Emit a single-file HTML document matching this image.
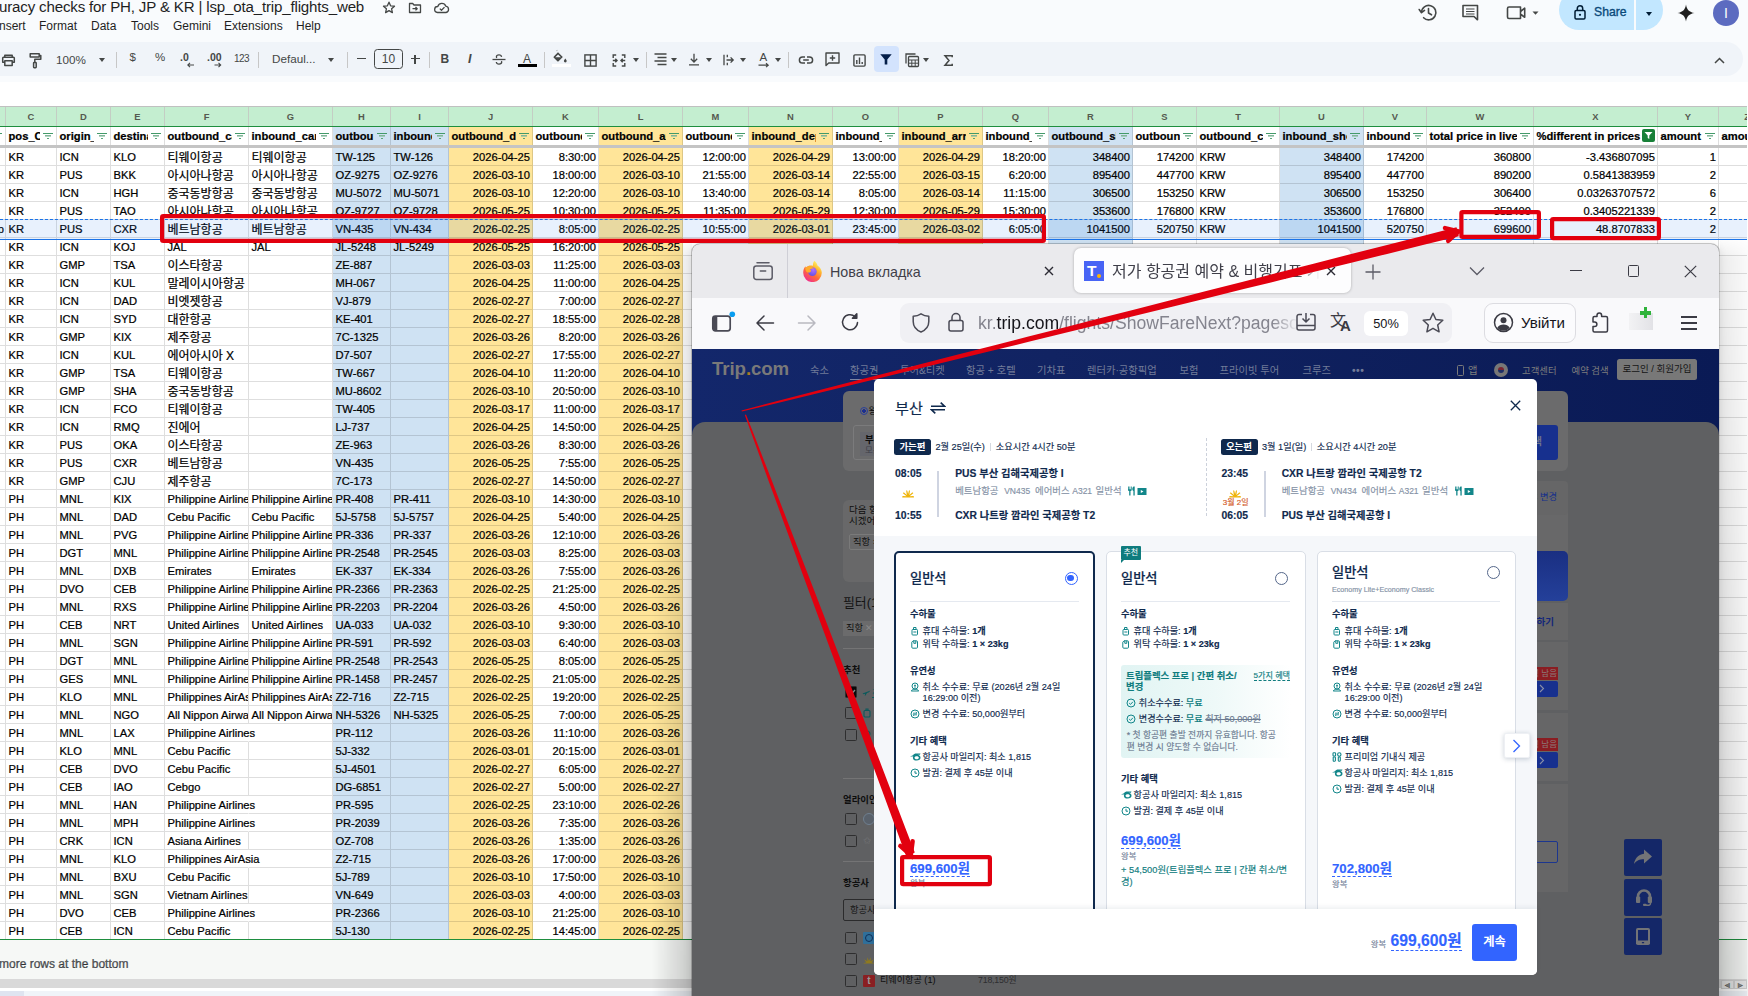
<!DOCTYPE html>
<html lang="en"><head><meta charset="utf-8"><title>Accuracy checks</title>
<style>
*{box-sizing:border-box;margin:0;padding:0}
html,body{width:1748px;height:996px;overflow:hidden;background:#fff}
body{position:relative;font-family:"Liberation Sans","Noto Sans CJK KR",sans-serif;color:#000}
.abs{position:absolute}
/* ---------- sheet top ---------- */
#top{position:absolute;left:0;top:0;width:1748px;height:82px;background:#f9fbfd}
#top .ttl{position:absolute;left:-1px;top:-2.400px;font-size:15.100px;line-height:18px;color:#1f1f1f;white-space:nowrap;letter-spacing:-.17px}
#top .menu span{position:absolute;top:19px;font-size:12px;line-height:14px;color:#1f1f1f;white-space:nowrap}
#tb{position:absolute;left:-30px;top:42px;width:1773px;height:34px;border-radius:17px;background:#f0f4f9}
#tbi{position:absolute;left:0;top:42px;width:1748px;height:34px}
#tbi .t{position:absolute;font-size:13px;color:#444746;white-space:nowrap}
#tbi .sep{position:absolute;top:10px;width:1px;height:16px;background:#c7c7c7}
#tbi svg{position:absolute;overflow:visible}
.car{position:absolute;width:0;height:0;border-left:3.5px solid transparent;border-right:3.5px solid transparent;border-top:4px solid #444746}
/* ---------- grid ---------- */
#grid{position:absolute;left:0;top:0;width:1747px;height:996px;font-size:11.2px;overflow:hidden;-webkit-text-stroke:.22px #000}
.colhdr{position:absolute;left:0;top:106px;width:1747px;height:21px;background:#c4eed0;border-top:1px solid #c0c0c0;border-bottom:1px solid #1e8e3e}
.colhdr b{-webkit-text-stroke:0;position:absolute;top:0;height:19px;line-height:19px;text-align:center;font-size:9.4px;font-weight:700;color:#55594f;border-right:1px solid #c4cdc4}
.hrow{position:absolute;left:0;top:127px;width:1747px;height:18px;font-weight:700}
.hrow i,.r i{position:absolute;top:0;height:18px;font-style:normal;white-space:nowrap;overflow:hidden;border-right:1px solid rgba(0,0,0,.13);border-bottom:1px solid rgba(0,0,0,.13);padding:0 3px 0 2.5px;line-height:18px}
.hrow i{border-bottom:none;background:#fff}
.hrow s{text-decoration:none}
.hrow u{position:absolute;right:0;top:0;width:16px;height:18px;background:inherit;text-decoration:none}
.hrow i.b,.r i.b{background:#cfe2f3}
.hrow i.y,.r i.y{background:#ffe599}
.hrow u.fi::before{content:"";position:absolute;left:3px;top:6px;width:10px;height:8px;background:linear-gradient(#439a69,#439a69) 0 0/10px 1px no-repeat,linear-gradient(#82b89a,#82b89a) 2px 2.4px/6px 1.6px no-repeat,linear-gradient(#5aa57a,#5aa57a) 4px 5px/2px 1.3px no-repeat}
.hrow u.fx{width:15px}
.hrow u.fx svg{position:absolute;left:0;top:2px;width:13px;height:13px;background:#188038;border-radius:2px;padding:2px}
.freeze{position:absolute;left:0;top:145px;width:1747px;height:3px;background:#c4c4c4}
.r{position:absolute;left:0;width:1747px;height:18px}
.r i.k{font-size:12px;line-height:20px}
.r i.cB{text-align:right;padding:0 1px 0 0}
.r i.ra{text-align:right;padding:0 2px 0 0}
.r i.ov{overflow:visible;border-right-color:transparent;z-index:1}
.r.sel::after{content:"";position:absolute;left:0;top:-1px;width:1747px;height:19px;background:rgba(26,115,232,.1);border-top:1px dashed #1a73e8;border-bottom:1px solid #1a73e8;z-index:2}
.cB{left:-39px;width:45px}
.cC{left:6px;width:51px}
.cD{left:57px;width:54px}
.cE{left:111px;width:54px}
.cF{left:165px;width:84px}
.cG{left:249px;width:84px}
.cH{left:333px;width:58px}
.cI{left:391px;width:58px}
.cJ{left:449px;width:84px}
.cK{left:533px;width:66px}
.cL{left:599px;width:84px}
.cM{left:683px;width:66px}
.cN{left:749px;width:84px}
.cO{left:833px;width:66px}
.cP{left:899px;width:84px}
.cQ{left:983px;width:66px}
.cR{left:1049px;width:84px}
.cS{left:1133px;width:64px}
.cT{left:1197px;width:83px}
.cU{left:1280px;width:84px}
.cV{left:1364px;width:63px}
.cW{left:1427px;width:107px}
.cX{left:1534px;width:124px}
.cY{left:1658px;width:61px}
.cZ{left:1719px;width:57px}
#gbot{position:absolute;left:0;top:939px;width:1748px;height:57px;background:#f6f8f6;border-top:1.5px solid #1e8e3e}
#gbot .more{position:absolute;left:-1px;top:17px;font-size:12px;line-height:14px;color:#5f6368}
#gbot .sb{position:absolute;left:0;top:39px;width:1748px;height:9px;background:#d9d9d9}
#gbot .wl{position:absolute;left:0;top:48px;width:1748px;height:3px;background:#fff}
#gbot .bb{position:absolute;left:0;top:51px;width:1748px;height:8px;background:#f0f4f9}
#gbot .sa{position:absolute;top:39.500px;width:12.500px;height:9px;background:#e9e9e9;border:1px solid #d0d0d0;font-size:6px;line-height:7px;text-align:center;color:#8a8a8a;font-family:'DejaVu Sans',sans-serif}
#gbot .bb2{position:absolute;left:0;top:51px;width:24px;height:8px;background:#dfe4f0}
#win{position:absolute;left:692px;top:244px;width:1027px;height:760px;border-radius:8px 8px 0 0;overflow:hidden;background:#5f6062;box-shadow:0 0 0 1px rgba(0,0,0,.2),0 1px 8px rgba(0,0,0,.1)}
#wo{position:absolute;left:-692px;top:-244px;width:1748px;height:996px}
.pn{position:absolute;top:363px;font-size:10.300px;line-height:15px;color:#717b98;white-space:nowrap}
.pf{position:absolute;left:843px;font-size:9.400px;font-weight:700;line-height:13px;color:#0e0e0e;white-space:nowrap}
.cb{position:absolute;left:845px;width:12px;height:12px;border:1px solid #2e2e2f;border-radius:1.500px}
.mt{position:absolute;white-space:nowrap;-webkit-text-stroke:.15px}
.mt b{font-weight:700}
</style></head><body>
<div id="grid">
<div class="colhdr">
<b class="cB">B</b>
<b class="cC">C</b>
<b class="cD">D</b>
<b class="cE">E</b>
<b class="cF">F</b>
<b class="cG">G</b>
<b class="cH">H</b>
<b class="cI">I</b>
<b class="cJ">J</b>
<b class="cK">K</b>
<b class="cL">L</b>
<b class="cM">M</b>
<b class="cN">N</b>
<b class="cO">O</b>
<b class="cP">P</b>
<b class="cQ">Q</b>
<b class="cR">R</b>
<b class="cS">S</b>
<b class="cT">T</b>
<b class="cU">U</b>
<b class="cV">V</b>
<b class="cW">W</b>
<b class="cX">X</b>
<b class="cY">Y</b>
<b class="cZ">Z</b>
</div>
<div class="hrow">
<i class="cB"><u class="fi"></u></i>
<i class="cC"><s>pos_Country</s><u class="fi"></u></i>
<i class="cD"><s>origin_</s><u class="fi"></u></i>
<i class="cE"><s>destination</s><u class="fi"></u></i>
<i class="cF"><s>outbound_carrier</s><u class="fi"></u></i>
<i class="cG"><s>inbound_carrier</s><u class="fi"></u></i>
<i class="cH b"><s>outbou</s><u class="fi"></u></i>
<i class="cI b"><s>inbound_</s><u class="fi"></u></i>
<i class="cJ y"><s>outbound_d</s><u class="fi"></u></i>
<i class="cK"><s>outbound_</s><u class="fi"></u></i>
<i class="cL y"><s>outbound_arr</s><u class="fi"></u></i>
<i class="cM"><s>outbound_</s><u class="fi"></u></i>
<i class="cN y"><s>inbound_dep</s><u class="fi"></u></i>
<i class="cO"><s>inbound_</s><u class="fi"></u></i>
<i class="cP y"><s>inbound_arr</s><u class="fi"></u></i>
<i class="cQ"><s>inbound_</s><u class="fi"></u></i>
<i class="cR b"><s>outbound_sh</s><u class="fi"></u></i>
<i class="cS"><s>outboun</s><u class="fi"></u></i>
<i class="cT"><s>outbound_cu</s><u class="fi"></u></i>
<i class="cU b"><s>inbound_sho</s><u class="fi"></u></i>
<i class="cV"><s>inbound</s><u class="fi"></u></i>
<i class="cW"><s>total price in live</s><u class="fi"></u></i>
<i class="cX"><s>%different in prices</s><u class="fx"><svg width="9" height="9" viewBox="0 0 9 9"><path d="M0.5 1h8L5.3 4.6V8L3.7 7V4.6z" fill="#fff"/></svg></u></i>
<i class="cY"><s>amount</s><u class="fi"></u></i>
<i class="cZ"><s>amount</s><u class="fi"></u></i>
</div><div class="freeze"></div>
<div class="r" style="top:148px">
<i class="cB"></i>
<i class="cC">KR</i>
<i class="cD">ICN</i>
<i class="cE">KLO</i>
<i class="cF k">티웨이항공</i>
<i class="cG k">티웨이항공</i>
<i class="cH b">TW-125</i>
<i class="cI b">TW-126</i>
<i class="cJ y ra">2026-04-25</i>
<i class="cK ra">8:30:00</i>
<i class="cL y ra">2026-04-25</i>
<i class="cM ra">12:00:00</i>
<i class="cN y ra">2026-04-29</i>
<i class="cO ra">13:00:00</i>
<i class="cP y ra">2026-04-29</i>
<i class="cQ ra">18:20:00</i>
<i class="cR b ra">348400</i>
<i class="cS ra">174200</i>
<i class="cT">KRW</i>
<i class="cU b ra">348400</i>
<i class="cV ra">174200</i>
<i class="cW ra">360800</i>
<i class="cX ra">-3.436807095</i>
<i class="cY ra">1</i>
<i class="cZ"></i>
</div>
<div class="r" style="top:166px">
<i class="cB"></i>
<i class="cC">KR</i>
<i class="cD">PUS</i>
<i class="cE">BKK</i>
<i class="cF k">아시아나항공</i>
<i class="cG k">아시아나항공</i>
<i class="cH b">OZ-9275</i>
<i class="cI b">OZ-9276</i>
<i class="cJ y ra">2026-03-10</i>
<i class="cK ra">18:00:00</i>
<i class="cL y ra">2026-03-10</i>
<i class="cM ra">21:55:00</i>
<i class="cN y ra">2026-03-14</i>
<i class="cO ra">22:55:00</i>
<i class="cP y ra">2026-03-15</i>
<i class="cQ ra">6:20:00</i>
<i class="cR b ra">895400</i>
<i class="cS ra">447700</i>
<i class="cT">KRW</i>
<i class="cU b ra">895400</i>
<i class="cV ra">447700</i>
<i class="cW ra">890200</i>
<i class="cX ra">0.5841383959</i>
<i class="cY ra">2</i>
<i class="cZ"></i>
</div>
<div class="r" style="top:184px">
<i class="cB"></i>
<i class="cC">KR</i>
<i class="cD">ICN</i>
<i class="cE">HGH</i>
<i class="cF k">중국동방항공</i>
<i class="cG k">중국동방항공</i>
<i class="cH b">MU-5072</i>
<i class="cI b">MU-5071</i>
<i class="cJ y ra">2026-03-10</i>
<i class="cK ra">12:20:00</i>
<i class="cL y ra">2026-03-10</i>
<i class="cM ra">13:40:00</i>
<i class="cN y ra">2026-03-14</i>
<i class="cO ra">8:05:00</i>
<i class="cP y ra">2026-03-14</i>
<i class="cQ ra">11:15:00</i>
<i class="cR b ra">306500</i>
<i class="cS ra">153250</i>
<i class="cT">KRW</i>
<i class="cU b ra">306500</i>
<i class="cV ra">153250</i>
<i class="cW ra">306400</i>
<i class="cX ra">0.03263707572</i>
<i class="cY ra">6</i>
<i class="cZ"></i>
</div>
<div class="r" style="top:202px">
<i class="cB"></i>
<i class="cC">KR</i>
<i class="cD">PUS</i>
<i class="cE">TAO</i>
<i class="cF k">아시아나항공</i>
<i class="cG k">아시아나항공</i>
<i class="cH b">OZ-9727</i>
<i class="cI b">OZ-9728</i>
<i class="cJ y ra">2026-05-25</i>
<i class="cK ra">10:30:00</i>
<i class="cL y ra">2026-05-25</i>
<i class="cM ra">11:35:00</i>
<i class="cN y ra">2026-05-29</i>
<i class="cO ra">12:30:00</i>
<i class="cP y ra">2026-05-29</i>
<i class="cQ ra">15:30:00</i>
<i class="cR b ra">353600</i>
<i class="cS ra">176800</i>
<i class="cT">KRW</i>
<i class="cU b ra">353600</i>
<i class="cV ra">176800</i>
<i class="cW ra">352400</i>
<i class="cX ra">0.3405221339</i>
<i class="cY ra">2</i>
<i class="cZ"></i>
</div>
<div class="r sel" style="top:220px">
<i class="cB">p</i>
<i class="cC">KR</i>
<i class="cD">PUS</i>
<i class="cE">CXR</i>
<i class="cF k">베트남항공</i>
<i class="cG k">베트남항공</i>
<i class="cH b">VN-435</i>
<i class="cI b">VN-434</i>
<i class="cJ y ra">2026-02-25</i>
<i class="cK ra">8:05:00</i>
<i class="cL y ra">2026-02-25</i>
<i class="cM ra">10:55:00</i>
<i class="cN y ra">2026-03-01</i>
<i class="cO ra">23:45:00</i>
<i class="cP y ra">2026-03-02</i>
<i class="cQ ra">6:05:00</i>
<i class="cR b ra">1041500</i>
<i class="cS ra">520750</i>
<i class="cT">KRW</i>
<i class="cU b ra">1041500</i>
<i class="cV ra">520750</i>
<i class="cW ra">699600</i>
<i class="cX ra">48.8707833</i>
<i class="cY ra">2</i>
<i class="cZ"></i>
</div>
<div class="r" style="top:238px">
<i class="cB"></i>
<i class="cC">KR</i>
<i class="cD">ICN</i>
<i class="cE">KOJ</i>
<i class="cF">JAL</i>
<i class="cG">JAL</i>
<i class="cH b">JL-5248</i>
<i class="cI b">JL-5249</i>
<i class="cJ y ra">2026-05-25</i>
<i class="cK ra">16:20:00</i>
<i class="cL y ra">2026-05-25</i>
<i class="cM ra"></i>
<i class="cN y ra"></i>
<i class="cO ra"></i>
<i class="cP y ra"></i>
<i class="cQ ra"></i>
<i class="cR b ra"></i>
<i class="cS ra"></i>
<i class="cT"></i>
<i class="cU b ra"></i>
<i class="cV ra"></i>
<i class="cW ra"></i>
<i class="cX ra"></i>
<i class="cY ra"></i>
<i class="cZ"></i>
</div>
<div class="r" style="top:256px">
<i class="cB"></i>
<i class="cC">KR</i>
<i class="cD">GMP</i>
<i class="cE">TSA</i>
<i class="cF k">이스타항공</i>
<i class="cG"></i>
<i class="cH b">ZE-887</i>
<i class="cI b"></i>
<i class="cJ y ra">2026-03-03</i>
<i class="cK ra">11:25:00</i>
<i class="cL y ra">2026-03-03</i>
<i class="cM ra"></i>
<i class="cN y ra"></i>
<i class="cO ra"></i>
<i class="cP y ra"></i>
<i class="cQ ra"></i>
<i class="cR b ra"></i>
<i class="cS ra"></i>
<i class="cT"></i>
<i class="cU b ra"></i>
<i class="cV ra"></i>
<i class="cW ra"></i>
<i class="cX ra"></i>
<i class="cY ra"></i>
<i class="cZ"></i>
</div>
<div class="r" style="top:274px">
<i class="cB"></i>
<i class="cC">KR</i>
<i class="cD">ICN</i>
<i class="cE">KUL</i>
<i class="cF k">말레이시아항공</i>
<i class="cG"></i>
<i class="cH b">MH-067</i>
<i class="cI b"></i>
<i class="cJ y ra">2026-04-25</i>
<i class="cK ra">11:00:00</i>
<i class="cL y ra">2026-04-25</i>
<i class="cM ra"></i>
<i class="cN y ra"></i>
<i class="cO ra"></i>
<i class="cP y ra"></i>
<i class="cQ ra"></i>
<i class="cR b ra"></i>
<i class="cS ra"></i>
<i class="cT"></i>
<i class="cU b ra"></i>
<i class="cV ra"></i>
<i class="cW ra"></i>
<i class="cX ra"></i>
<i class="cY ra"></i>
<i class="cZ"></i>
</div>
<div class="r" style="top:292px">
<i class="cB"></i>
<i class="cC">KR</i>
<i class="cD">ICN</i>
<i class="cE">DAD</i>
<i class="cF k">비엣젯항공</i>
<i class="cG"></i>
<i class="cH b">VJ-879</i>
<i class="cI b"></i>
<i class="cJ y ra">2026-02-27</i>
<i class="cK ra">7:00:00</i>
<i class="cL y ra">2026-02-27</i>
<i class="cM ra"></i>
<i class="cN y ra"></i>
<i class="cO ra"></i>
<i class="cP y ra"></i>
<i class="cQ ra"></i>
<i class="cR b ra"></i>
<i class="cS ra"></i>
<i class="cT"></i>
<i class="cU b ra"></i>
<i class="cV ra"></i>
<i class="cW ra"></i>
<i class="cX ra"></i>
<i class="cY ra"></i>
<i class="cZ"></i>
</div>
<div class="r" style="top:310px">
<i class="cB"></i>
<i class="cC">KR</i>
<i class="cD">ICN</i>
<i class="cE">SYD</i>
<i class="cF k">대한항공</i>
<i class="cG"></i>
<i class="cH b">KE-401</i>
<i class="cI b"></i>
<i class="cJ y ra">2026-02-27</i>
<i class="cK ra">18:55:00</i>
<i class="cL y ra">2026-02-28</i>
<i class="cM ra"></i>
<i class="cN y ra"></i>
<i class="cO ra"></i>
<i class="cP y ra"></i>
<i class="cQ ra"></i>
<i class="cR b ra"></i>
<i class="cS ra"></i>
<i class="cT"></i>
<i class="cU b ra"></i>
<i class="cV ra"></i>
<i class="cW ra"></i>
<i class="cX ra"></i>
<i class="cY ra"></i>
<i class="cZ"></i>
</div>
<div class="r" style="top:328px">
<i class="cB"></i>
<i class="cC">KR</i>
<i class="cD">GMP</i>
<i class="cE">KIX</i>
<i class="cF k">제주항공</i>
<i class="cG"></i>
<i class="cH b">7C-1325</i>
<i class="cI b"></i>
<i class="cJ y ra">2026-03-26</i>
<i class="cK ra">8:20:00</i>
<i class="cL y ra">2026-03-26</i>
<i class="cM ra"></i>
<i class="cN y ra"></i>
<i class="cO ra"></i>
<i class="cP y ra"></i>
<i class="cQ ra"></i>
<i class="cR b ra"></i>
<i class="cS ra"></i>
<i class="cT"></i>
<i class="cU b ra"></i>
<i class="cV ra"></i>
<i class="cW ra"></i>
<i class="cX ra"></i>
<i class="cY ra"></i>
<i class="cZ"></i>
</div>
<div class="r" style="top:346px">
<i class="cB"></i>
<i class="cC">KR</i>
<i class="cD">ICN</i>
<i class="cE">KUL</i>
<i class="cF k">에어아시아 X</i>
<i class="cG"></i>
<i class="cH b">D7-507</i>
<i class="cI b"></i>
<i class="cJ y ra">2026-02-27</i>
<i class="cK ra">17:55:00</i>
<i class="cL y ra">2026-02-27</i>
<i class="cM ra"></i>
<i class="cN y ra"></i>
<i class="cO ra"></i>
<i class="cP y ra"></i>
<i class="cQ ra"></i>
<i class="cR b ra"></i>
<i class="cS ra"></i>
<i class="cT"></i>
<i class="cU b ra"></i>
<i class="cV ra"></i>
<i class="cW ra"></i>
<i class="cX ra"></i>
<i class="cY ra"></i>
<i class="cZ"></i>
</div>
<div class="r" style="top:364px">
<i class="cB"></i>
<i class="cC">KR</i>
<i class="cD">GMP</i>
<i class="cE">TSA</i>
<i class="cF k">티웨이항공</i>
<i class="cG"></i>
<i class="cH b">TW-667</i>
<i class="cI b"></i>
<i class="cJ y ra">2026-04-10</i>
<i class="cK ra">11:20:00</i>
<i class="cL y ra">2026-04-10</i>
<i class="cM ra"></i>
<i class="cN y ra"></i>
<i class="cO ra"></i>
<i class="cP y ra"></i>
<i class="cQ ra"></i>
<i class="cR b ra"></i>
<i class="cS ra"></i>
<i class="cT"></i>
<i class="cU b ra"></i>
<i class="cV ra"></i>
<i class="cW ra"></i>
<i class="cX ra"></i>
<i class="cY ra"></i>
<i class="cZ"></i>
</div>
<div class="r" style="top:382px">
<i class="cB"></i>
<i class="cC">KR</i>
<i class="cD">GMP</i>
<i class="cE">SHA</i>
<i class="cF k">중국동방항공</i>
<i class="cG"></i>
<i class="cH b">MU-8602</i>
<i class="cI b"></i>
<i class="cJ y ra">2026-03-10</i>
<i class="cK ra">20:50:00</i>
<i class="cL y ra">2026-03-10</i>
<i class="cM ra"></i>
<i class="cN y ra"></i>
<i class="cO ra"></i>
<i class="cP y ra"></i>
<i class="cQ ra"></i>
<i class="cR b ra"></i>
<i class="cS ra"></i>
<i class="cT"></i>
<i class="cU b ra"></i>
<i class="cV ra"></i>
<i class="cW ra"></i>
<i class="cX ra"></i>
<i class="cY ra"></i>
<i class="cZ"></i>
</div>
<div class="r" style="top:400px">
<i class="cB"></i>
<i class="cC">KR</i>
<i class="cD">ICN</i>
<i class="cE">FCO</i>
<i class="cF k">티웨이항공</i>
<i class="cG"></i>
<i class="cH b">TW-405</i>
<i class="cI b"></i>
<i class="cJ y ra">2026-03-17</i>
<i class="cK ra">11:00:00</i>
<i class="cL y ra">2026-03-17</i>
<i class="cM ra"></i>
<i class="cN y ra"></i>
<i class="cO ra"></i>
<i class="cP y ra"></i>
<i class="cQ ra"></i>
<i class="cR b ra"></i>
<i class="cS ra"></i>
<i class="cT"></i>
<i class="cU b ra"></i>
<i class="cV ra"></i>
<i class="cW ra"></i>
<i class="cX ra"></i>
<i class="cY ra"></i>
<i class="cZ"></i>
</div>
<div class="r" style="top:418px">
<i class="cB"></i>
<i class="cC">KR</i>
<i class="cD">ICN</i>
<i class="cE">RMQ</i>
<i class="cF k">진에어</i>
<i class="cG"></i>
<i class="cH b">LJ-737</i>
<i class="cI b"></i>
<i class="cJ y ra">2026-04-25</i>
<i class="cK ra">14:50:00</i>
<i class="cL y ra">2026-04-25</i>
<i class="cM ra"></i>
<i class="cN y ra"></i>
<i class="cO ra"></i>
<i class="cP y ra"></i>
<i class="cQ ra"></i>
<i class="cR b ra"></i>
<i class="cS ra"></i>
<i class="cT"></i>
<i class="cU b ra"></i>
<i class="cV ra"></i>
<i class="cW ra"></i>
<i class="cX ra"></i>
<i class="cY ra"></i>
<i class="cZ"></i>
</div>
<div class="r" style="top:436px">
<i class="cB"></i>
<i class="cC">KR</i>
<i class="cD">PUS</i>
<i class="cE">OKA</i>
<i class="cF k">이스타항공</i>
<i class="cG"></i>
<i class="cH b">ZE-963</i>
<i class="cI b"></i>
<i class="cJ y ra">2026-03-26</i>
<i class="cK ra">8:30:00</i>
<i class="cL y ra">2026-03-26</i>
<i class="cM ra"></i>
<i class="cN y ra"></i>
<i class="cO ra"></i>
<i class="cP y ra"></i>
<i class="cQ ra"></i>
<i class="cR b ra"></i>
<i class="cS ra"></i>
<i class="cT"></i>
<i class="cU b ra"></i>
<i class="cV ra"></i>
<i class="cW ra"></i>
<i class="cX ra"></i>
<i class="cY ra"></i>
<i class="cZ"></i>
</div>
<div class="r" style="top:454px">
<i class="cB"></i>
<i class="cC">KR</i>
<i class="cD">PUS</i>
<i class="cE">CXR</i>
<i class="cF k">베트남항공</i>
<i class="cG"></i>
<i class="cH b">VN-435</i>
<i class="cI b"></i>
<i class="cJ y ra">2026-05-25</i>
<i class="cK ra">7:55:00</i>
<i class="cL y ra">2026-05-25</i>
<i class="cM ra"></i>
<i class="cN y ra"></i>
<i class="cO ra"></i>
<i class="cP y ra"></i>
<i class="cQ ra"></i>
<i class="cR b ra"></i>
<i class="cS ra"></i>
<i class="cT"></i>
<i class="cU b ra"></i>
<i class="cV ra"></i>
<i class="cW ra"></i>
<i class="cX ra"></i>
<i class="cY ra"></i>
<i class="cZ"></i>
</div>
<div class="r" style="top:472px">
<i class="cB"></i>
<i class="cC">KR</i>
<i class="cD">GMP</i>
<i class="cE">CJU</i>
<i class="cF k">제주항공</i>
<i class="cG"></i>
<i class="cH b">7C-173</i>
<i class="cI b"></i>
<i class="cJ y ra">2026-02-27</i>
<i class="cK ra">14:50:00</i>
<i class="cL y ra">2026-02-27</i>
<i class="cM ra"></i>
<i class="cN y ra"></i>
<i class="cO ra"></i>
<i class="cP y ra"></i>
<i class="cQ ra"></i>
<i class="cR b ra"></i>
<i class="cS ra"></i>
<i class="cT"></i>
<i class="cU b ra"></i>
<i class="cV ra"></i>
<i class="cW ra"></i>
<i class="cX ra"></i>
<i class="cY ra"></i>
<i class="cZ"></i>
</div>
<div class="r" style="top:490px">
<i class="cB"></i>
<i class="cC">PH</i>
<i class="cD">MNL</i>
<i class="cE">KIX</i>
<i class="cF">Philippine Airlines</i>
<i class="cG">Philippine Airlines</i>
<i class="cH b">PR-408</i>
<i class="cI b">PR-411</i>
<i class="cJ y ra">2026-03-10</i>
<i class="cK ra">14:30:00</i>
<i class="cL y ra">2026-03-10</i>
<i class="cM ra"></i>
<i class="cN y ra"></i>
<i class="cO ra"></i>
<i class="cP y ra"></i>
<i class="cQ ra"></i>
<i class="cR b ra"></i>
<i class="cS ra"></i>
<i class="cT"></i>
<i class="cU b ra"></i>
<i class="cV ra"></i>
<i class="cW ra"></i>
<i class="cX ra"></i>
<i class="cY ra"></i>
<i class="cZ"></i>
</div>
<div class="r" style="top:508px">
<i class="cB"></i>
<i class="cC">PH</i>
<i class="cD">MNL</i>
<i class="cE">DAD</i>
<i class="cF">Cebu Pacific</i>
<i class="cG">Cebu Pacific</i>
<i class="cH b">5J-5758</i>
<i class="cI b">5J-5757</i>
<i class="cJ y ra">2026-04-25</i>
<i class="cK ra">5:40:00</i>
<i class="cL y ra">2026-04-25</i>
<i class="cM ra"></i>
<i class="cN y ra"></i>
<i class="cO ra"></i>
<i class="cP y ra"></i>
<i class="cQ ra"></i>
<i class="cR b ra"></i>
<i class="cS ra"></i>
<i class="cT"></i>
<i class="cU b ra"></i>
<i class="cV ra"></i>
<i class="cW ra"></i>
<i class="cX ra"></i>
<i class="cY ra"></i>
<i class="cZ"></i>
</div>
<div class="r" style="top:526px">
<i class="cB"></i>
<i class="cC">PH</i>
<i class="cD">MNL</i>
<i class="cE">PVG</i>
<i class="cF">Philippine Airlines</i>
<i class="cG">Philippine Airlines</i>
<i class="cH b">PR-336</i>
<i class="cI b">PR-337</i>
<i class="cJ y ra">2026-03-26</i>
<i class="cK ra">12:10:00</i>
<i class="cL y ra">2026-03-26</i>
<i class="cM ra"></i>
<i class="cN y ra"></i>
<i class="cO ra"></i>
<i class="cP y ra"></i>
<i class="cQ ra"></i>
<i class="cR b ra"></i>
<i class="cS ra"></i>
<i class="cT"></i>
<i class="cU b ra"></i>
<i class="cV ra"></i>
<i class="cW ra"></i>
<i class="cX ra"></i>
<i class="cY ra"></i>
<i class="cZ"></i>
</div>
<div class="r" style="top:544px">
<i class="cB"></i>
<i class="cC">PH</i>
<i class="cD">DGT</i>
<i class="cE">MNL</i>
<i class="cF">Philippine Airlines</i>
<i class="cG">Philippine Airlines</i>
<i class="cH b">PR-2548</i>
<i class="cI b">PR-2545</i>
<i class="cJ y ra">2026-03-03</i>
<i class="cK ra">8:25:00</i>
<i class="cL y ra">2026-03-03</i>
<i class="cM ra"></i>
<i class="cN y ra"></i>
<i class="cO ra"></i>
<i class="cP y ra"></i>
<i class="cQ ra"></i>
<i class="cR b ra"></i>
<i class="cS ra"></i>
<i class="cT"></i>
<i class="cU b ra"></i>
<i class="cV ra"></i>
<i class="cW ra"></i>
<i class="cX ra"></i>
<i class="cY ra"></i>
<i class="cZ"></i>
</div>
<div class="r" style="top:562px">
<i class="cB"></i>
<i class="cC">PH</i>
<i class="cD">MNL</i>
<i class="cE">DXB</i>
<i class="cF">Emirates</i>
<i class="cG">Emirates</i>
<i class="cH b">EK-337</i>
<i class="cI b">EK-334</i>
<i class="cJ y ra">2026-03-26</i>
<i class="cK ra">7:55:00</i>
<i class="cL y ra">2026-03-26</i>
<i class="cM ra"></i>
<i class="cN y ra"></i>
<i class="cO ra"></i>
<i class="cP y ra"></i>
<i class="cQ ra"></i>
<i class="cR b ra"></i>
<i class="cS ra"></i>
<i class="cT"></i>
<i class="cU b ra"></i>
<i class="cV ra"></i>
<i class="cW ra"></i>
<i class="cX ra"></i>
<i class="cY ra"></i>
<i class="cZ"></i>
</div>
<div class="r" style="top:580px">
<i class="cB"></i>
<i class="cC">PH</i>
<i class="cD">DVO</i>
<i class="cE">CEB</i>
<i class="cF">Philippine Airlines</i>
<i class="cG">Philippine Airlines</i>
<i class="cH b">PR-2366</i>
<i class="cI b">PR-2363</i>
<i class="cJ y ra">2026-02-25</i>
<i class="cK ra">21:25:00</i>
<i class="cL y ra">2026-02-25</i>
<i class="cM ra"></i>
<i class="cN y ra"></i>
<i class="cO ra"></i>
<i class="cP y ra"></i>
<i class="cQ ra"></i>
<i class="cR b ra"></i>
<i class="cS ra"></i>
<i class="cT"></i>
<i class="cU b ra"></i>
<i class="cV ra"></i>
<i class="cW ra"></i>
<i class="cX ra"></i>
<i class="cY ra"></i>
<i class="cZ"></i>
</div>
<div class="r" style="top:598px">
<i class="cB"></i>
<i class="cC">PH</i>
<i class="cD">MNL</i>
<i class="cE">RXS</i>
<i class="cF">Philippine Airlines</i>
<i class="cG">Philippine Airlines</i>
<i class="cH b">PR-2203</i>
<i class="cI b">PR-2204</i>
<i class="cJ y ra">2026-03-26</i>
<i class="cK ra">4:50:00</i>
<i class="cL y ra">2026-03-26</i>
<i class="cM ra"></i>
<i class="cN y ra"></i>
<i class="cO ra"></i>
<i class="cP y ra"></i>
<i class="cQ ra"></i>
<i class="cR b ra"></i>
<i class="cS ra"></i>
<i class="cT"></i>
<i class="cU b ra"></i>
<i class="cV ra"></i>
<i class="cW ra"></i>
<i class="cX ra"></i>
<i class="cY ra"></i>
<i class="cZ"></i>
</div>
<div class="r" style="top:616px">
<i class="cB"></i>
<i class="cC">PH</i>
<i class="cD">CEB</i>
<i class="cE">NRT</i>
<i class="cF">United Airlines</i>
<i class="cG">United Airlines</i>
<i class="cH b">UA-033</i>
<i class="cI b">UA-032</i>
<i class="cJ y ra">2026-03-10</i>
<i class="cK ra">9:30:00</i>
<i class="cL y ra">2026-03-10</i>
<i class="cM ra"></i>
<i class="cN y ra"></i>
<i class="cO ra"></i>
<i class="cP y ra"></i>
<i class="cQ ra"></i>
<i class="cR b ra"></i>
<i class="cS ra"></i>
<i class="cT"></i>
<i class="cU b ra"></i>
<i class="cV ra"></i>
<i class="cW ra"></i>
<i class="cX ra"></i>
<i class="cY ra"></i>
<i class="cZ"></i>
</div>
<div class="r" style="top:634px">
<i class="cB"></i>
<i class="cC">PH</i>
<i class="cD">MNL</i>
<i class="cE">SGN</i>
<i class="cF">Philippine Airlines</i>
<i class="cG">Philippine Airlines</i>
<i class="cH b">PR-591</i>
<i class="cI b">PR-592</i>
<i class="cJ y ra">2026-03-03</i>
<i class="cK ra">6:40:00</i>
<i class="cL y ra">2026-03-03</i>
<i class="cM ra"></i>
<i class="cN y ra"></i>
<i class="cO ra"></i>
<i class="cP y ra"></i>
<i class="cQ ra"></i>
<i class="cR b ra"></i>
<i class="cS ra"></i>
<i class="cT"></i>
<i class="cU b ra"></i>
<i class="cV ra"></i>
<i class="cW ra"></i>
<i class="cX ra"></i>
<i class="cY ra"></i>
<i class="cZ"></i>
</div>
<div class="r" style="top:652px">
<i class="cB"></i>
<i class="cC">PH</i>
<i class="cD">DGT</i>
<i class="cE">MNL</i>
<i class="cF">Philippine Airlines</i>
<i class="cG">Philippine Airlines</i>
<i class="cH b">PR-2548</i>
<i class="cI b">PR-2543</i>
<i class="cJ y ra">2026-05-25</i>
<i class="cK ra">8:05:00</i>
<i class="cL y ra">2026-05-25</i>
<i class="cM ra"></i>
<i class="cN y ra"></i>
<i class="cO ra"></i>
<i class="cP y ra"></i>
<i class="cQ ra"></i>
<i class="cR b ra"></i>
<i class="cS ra"></i>
<i class="cT"></i>
<i class="cU b ra"></i>
<i class="cV ra"></i>
<i class="cW ra"></i>
<i class="cX ra"></i>
<i class="cY ra"></i>
<i class="cZ"></i>
</div>
<div class="r" style="top:670px">
<i class="cB"></i>
<i class="cC">PH</i>
<i class="cD">GES</i>
<i class="cE">MNL</i>
<i class="cF">Philippine Airlines</i>
<i class="cG">Philippine Airlines</i>
<i class="cH b">PR-1458</i>
<i class="cI b">PR-2457</i>
<i class="cJ y ra">2026-02-25</i>
<i class="cK ra">21:05:00</i>
<i class="cL y ra">2026-02-25</i>
<i class="cM ra"></i>
<i class="cN y ra"></i>
<i class="cO ra"></i>
<i class="cP y ra"></i>
<i class="cQ ra"></i>
<i class="cR b ra"></i>
<i class="cS ra"></i>
<i class="cT"></i>
<i class="cU b ra"></i>
<i class="cV ra"></i>
<i class="cW ra"></i>
<i class="cX ra"></i>
<i class="cY ra"></i>
<i class="cZ"></i>
</div>
<div class="r" style="top:688px">
<i class="cB"></i>
<i class="cC">PH</i>
<i class="cD">KLO</i>
<i class="cE">MNL</i>
<i class="cF">Philippines AirAsia</i>
<i class="cG">Philippines AirAsia</i>
<i class="cH b">Z2-716</i>
<i class="cI b">Z2-715</i>
<i class="cJ y ra">2026-02-25</i>
<i class="cK ra">19:20:00</i>
<i class="cL y ra">2026-02-25</i>
<i class="cM ra"></i>
<i class="cN y ra"></i>
<i class="cO ra"></i>
<i class="cP y ra"></i>
<i class="cQ ra"></i>
<i class="cR b ra"></i>
<i class="cS ra"></i>
<i class="cT"></i>
<i class="cU b ra"></i>
<i class="cV ra"></i>
<i class="cW ra"></i>
<i class="cX ra"></i>
<i class="cY ra"></i>
<i class="cZ"></i>
</div>
<div class="r" style="top:706px">
<i class="cB"></i>
<i class="cC">PH</i>
<i class="cD">MNL</i>
<i class="cE">NGO</i>
<i class="cF">All Nippon Airways</i>
<i class="cG">All Nippon Airways</i>
<i class="cH b">NH-5326</i>
<i class="cI b">NH-5325</i>
<i class="cJ y ra">2026-05-25</i>
<i class="cK ra">7:00:00</i>
<i class="cL y ra">2026-05-25</i>
<i class="cM ra"></i>
<i class="cN y ra"></i>
<i class="cO ra"></i>
<i class="cP y ra"></i>
<i class="cQ ra"></i>
<i class="cR b ra"></i>
<i class="cS ra"></i>
<i class="cT"></i>
<i class="cU b ra"></i>
<i class="cV ra"></i>
<i class="cW ra"></i>
<i class="cX ra"></i>
<i class="cY ra"></i>
<i class="cZ"></i>
</div>
<div class="r" style="top:724px">
<i class="cB"></i>
<i class="cC">PH</i>
<i class="cD">MNL</i>
<i class="cE">LAX</i>
<i class="cF ov">Philippine Airlines</i>
<i class="cG nb"></i>
<i class="cH b">PR-112</i>
<i class="cI b"></i>
<i class="cJ y ra">2026-03-26</i>
<i class="cK ra">11:10:00</i>
<i class="cL y ra">2026-03-26</i>
<i class="cM ra"></i>
<i class="cN y ra"></i>
<i class="cO ra"></i>
<i class="cP y ra"></i>
<i class="cQ ra"></i>
<i class="cR b ra"></i>
<i class="cS ra"></i>
<i class="cT"></i>
<i class="cU b ra"></i>
<i class="cV ra"></i>
<i class="cW ra"></i>
<i class="cX ra"></i>
<i class="cY ra"></i>
<i class="cZ"></i>
</div>
<div class="r" style="top:742px">
<i class="cB"></i>
<i class="cC">PH</i>
<i class="cD">KLO</i>
<i class="cE">MNL</i>
<i class="cF">Cebu Pacific</i>
<i class="cG"></i>
<i class="cH b">5J-332</i>
<i class="cI b"></i>
<i class="cJ y ra">2026-03-01</i>
<i class="cK ra">20:15:00</i>
<i class="cL y ra">2026-03-01</i>
<i class="cM ra"></i>
<i class="cN y ra"></i>
<i class="cO ra"></i>
<i class="cP y ra"></i>
<i class="cQ ra"></i>
<i class="cR b ra"></i>
<i class="cS ra"></i>
<i class="cT"></i>
<i class="cU b ra"></i>
<i class="cV ra"></i>
<i class="cW ra"></i>
<i class="cX ra"></i>
<i class="cY ra"></i>
<i class="cZ"></i>
</div>
<div class="r" style="top:760px">
<i class="cB"></i>
<i class="cC">PH</i>
<i class="cD">CEB</i>
<i class="cE">DVO</i>
<i class="cF">Cebu Pacific</i>
<i class="cG"></i>
<i class="cH b">5J-4501</i>
<i class="cI b"></i>
<i class="cJ y ra">2026-02-27</i>
<i class="cK ra">6:05:00</i>
<i class="cL y ra">2026-02-27</i>
<i class="cM ra"></i>
<i class="cN y ra"></i>
<i class="cO ra"></i>
<i class="cP y ra"></i>
<i class="cQ ra"></i>
<i class="cR b ra"></i>
<i class="cS ra"></i>
<i class="cT"></i>
<i class="cU b ra"></i>
<i class="cV ra"></i>
<i class="cW ra"></i>
<i class="cX ra"></i>
<i class="cY ra"></i>
<i class="cZ"></i>
</div>
<div class="r" style="top:778px">
<i class="cB"></i>
<i class="cC">PH</i>
<i class="cD">CEB</i>
<i class="cE">IAO</i>
<i class="cF">Cebgo</i>
<i class="cG"></i>
<i class="cH b">DG-6851</i>
<i class="cI b"></i>
<i class="cJ y ra">2026-02-27</i>
<i class="cK ra">5:00:00</i>
<i class="cL y ra">2026-02-27</i>
<i class="cM ra"></i>
<i class="cN y ra"></i>
<i class="cO ra"></i>
<i class="cP y ra"></i>
<i class="cQ ra"></i>
<i class="cR b ra"></i>
<i class="cS ra"></i>
<i class="cT"></i>
<i class="cU b ra"></i>
<i class="cV ra"></i>
<i class="cW ra"></i>
<i class="cX ra"></i>
<i class="cY ra"></i>
<i class="cZ"></i>
</div>
<div class="r" style="top:796px">
<i class="cB"></i>
<i class="cC">PH</i>
<i class="cD">MNL</i>
<i class="cE">HAN</i>
<i class="cF ov">Philippine Airlines</i>
<i class="cG nb"></i>
<i class="cH b">PR-595</i>
<i class="cI b"></i>
<i class="cJ y ra">2026-02-25</i>
<i class="cK ra">23:10:00</i>
<i class="cL y ra">2026-02-26</i>
<i class="cM ra"></i>
<i class="cN y ra"></i>
<i class="cO ra"></i>
<i class="cP y ra"></i>
<i class="cQ ra"></i>
<i class="cR b ra"></i>
<i class="cS ra"></i>
<i class="cT"></i>
<i class="cU b ra"></i>
<i class="cV ra"></i>
<i class="cW ra"></i>
<i class="cX ra"></i>
<i class="cY ra"></i>
<i class="cZ"></i>
</div>
<div class="r" style="top:814px">
<i class="cB"></i>
<i class="cC">PH</i>
<i class="cD">MNL</i>
<i class="cE">MPH</i>
<i class="cF ov">Philippine Airlines</i>
<i class="cG nb"></i>
<i class="cH b">PR-2039</i>
<i class="cI b"></i>
<i class="cJ y ra">2026-03-26</i>
<i class="cK ra">7:35:00</i>
<i class="cL y ra">2026-03-26</i>
<i class="cM ra"></i>
<i class="cN y ra"></i>
<i class="cO ra"></i>
<i class="cP y ra"></i>
<i class="cQ ra"></i>
<i class="cR b ra"></i>
<i class="cS ra"></i>
<i class="cT"></i>
<i class="cU b ra"></i>
<i class="cV ra"></i>
<i class="cW ra"></i>
<i class="cX ra"></i>
<i class="cY ra"></i>
<i class="cZ"></i>
</div>
<div class="r" style="top:832px">
<i class="cB"></i>
<i class="cC">PH</i>
<i class="cD">CRK</i>
<i class="cE">ICN</i>
<i class="cF">Asiana Airlines</i>
<i class="cG"></i>
<i class="cH b">OZ-708</i>
<i class="cI b"></i>
<i class="cJ y ra">2026-03-26</i>
<i class="cK ra">1:35:00</i>
<i class="cL y ra">2026-03-26</i>
<i class="cM ra"></i>
<i class="cN y ra"></i>
<i class="cO ra"></i>
<i class="cP y ra"></i>
<i class="cQ ra"></i>
<i class="cR b ra"></i>
<i class="cS ra"></i>
<i class="cT"></i>
<i class="cU b ra"></i>
<i class="cV ra"></i>
<i class="cW ra"></i>
<i class="cX ra"></i>
<i class="cY ra"></i>
<i class="cZ"></i>
</div>
<div class="r" style="top:850px">
<i class="cB"></i>
<i class="cC">PH</i>
<i class="cD">MNL</i>
<i class="cE">KLO</i>
<i class="cF ov">Philippines AirAsia</i>
<i class="cG nb"></i>
<i class="cH b">Z2-715</i>
<i class="cI b"></i>
<i class="cJ y ra">2026-03-26</i>
<i class="cK ra">17:00:00</i>
<i class="cL y ra">2026-03-26</i>
<i class="cM ra"></i>
<i class="cN y ra"></i>
<i class="cO ra"></i>
<i class="cP y ra"></i>
<i class="cQ ra"></i>
<i class="cR b ra"></i>
<i class="cS ra"></i>
<i class="cT"></i>
<i class="cU b ra"></i>
<i class="cV ra"></i>
<i class="cW ra"></i>
<i class="cX ra"></i>
<i class="cY ra"></i>
<i class="cZ"></i>
</div>
<div class="r" style="top:868px">
<i class="cB"></i>
<i class="cC">PH</i>
<i class="cD">MNL</i>
<i class="cE">BXU</i>
<i class="cF">Cebu Pacific</i>
<i class="cG"></i>
<i class="cH b">5J-789</i>
<i class="cI b"></i>
<i class="cJ y ra">2026-03-10</i>
<i class="cK ra">17:50:00</i>
<i class="cL y ra">2026-03-10</i>
<i class="cM ra"></i>
<i class="cN y ra"></i>
<i class="cO ra"></i>
<i class="cP y ra"></i>
<i class="cQ ra"></i>
<i class="cR b ra"></i>
<i class="cS ra"></i>
<i class="cT"></i>
<i class="cU b ra"></i>
<i class="cV ra"></i>
<i class="cW ra"></i>
<i class="cX ra"></i>
<i class="cY ra"></i>
<i class="cZ"></i>
</div>
<div class="r" style="top:886px">
<i class="cB"></i>
<i class="cC">PH</i>
<i class="cD">MNL</i>
<i class="cE">SGN</i>
<i class="cF">Vietnam Airlines</i>
<i class="cG"></i>
<i class="cH b">VN-649</i>
<i class="cI b"></i>
<i class="cJ y ra">2026-03-03</i>
<i class="cK ra">4:00:00</i>
<i class="cL y ra">2026-03-03</i>
<i class="cM ra"></i>
<i class="cN y ra"></i>
<i class="cO ra"></i>
<i class="cP y ra"></i>
<i class="cQ ra"></i>
<i class="cR b ra"></i>
<i class="cS ra"></i>
<i class="cT"></i>
<i class="cU b ra"></i>
<i class="cV ra"></i>
<i class="cW ra"></i>
<i class="cX ra"></i>
<i class="cY ra"></i>
<i class="cZ"></i>
</div>
<div class="r" style="top:904px">
<i class="cB"></i>
<i class="cC">PH</i>
<i class="cD">DVO</i>
<i class="cE">CEB</i>
<i class="cF ov">Philippine Airlines</i>
<i class="cG nb"></i>
<i class="cH b">PR-2366</i>
<i class="cI b"></i>
<i class="cJ y ra">2026-03-10</i>
<i class="cK ra">21:25:00</i>
<i class="cL y ra">2026-03-10</i>
<i class="cM ra"></i>
<i class="cN y ra"></i>
<i class="cO ra"></i>
<i class="cP y ra"></i>
<i class="cQ ra"></i>
<i class="cR b ra"></i>
<i class="cS ra"></i>
<i class="cT"></i>
<i class="cU b ra"></i>
<i class="cV ra"></i>
<i class="cW ra"></i>
<i class="cX ra"></i>
<i class="cY ra"></i>
<i class="cZ"></i>
</div>
<div class="r" style="top:922px">
<i class="cB"></i>
<i class="cC">PH</i>
<i class="cD">CEB</i>
<i class="cE">ICN</i>
<i class="cF">Cebu Pacific</i>
<i class="cG"></i>
<i class="cH b">5J-130</i>
<i class="cI b"></i>
<i class="cJ y ra">2026-02-25</i>
<i class="cK ra">14:45:00</i>
<i class="cL y ra">2026-02-25</i>
<i class="cM ra"></i>
<i class="cN y ra"></i>
<i class="cO ra"></i>
<i class="cP y ra"></i>
<i class="cQ ra"></i>
<i class="cR b ra"></i>
<i class="cS ra"></i>
<i class="cT"></i>
<i class="cU b ra"></i>
<i class="cV ra"></i>
<i class="cW ra"></i>
<i class="cX ra"></i>
<i class="cY ra"></i>
<i class="cZ"></i>
</div>
<div id="gbot"><div class="more">more rows at the bottom</div><div class="sb"></div><div class="wl"></div><div class="bb"></div><div class="bb2"></div><div class="sa" style="left:1721px">◀</div><div class="sa" style="left:1734px">▶</div></div>
</div>
<div id="top">
<div class="ttl">uracy checks for PH, JP &amp; KR | lsp_ota_trip_flights_web</div>
<svg class="abs" style="left:380.600px;top:-.4px" width="70" height="16" viewBox="0 0 70 16" fill="none" stroke="#444746" stroke-width="1.3">
<path d="M8 2.2l1.6 3.6 3.9.4-2.9 2.6.8 3.8L8 10.6l-3.4 2 .8-3.8-2.900-2.600 3.900-.4z" stroke-linejoin="round"/>
<path d="M28.500 3.500h3.200l1.300 1.500h6.500v7.500h-11z M31.500 8.700h4.500 M34.500 7l1.700 1.700-1.700 1.700" stroke-linejoin="round"/>
<path d="M56.500 12.500a3 3 0 0 1 .3-6 4.200 4.200 0 0 1 8-.3 3.200 3.200 0 0 1 .2 6.300z M58.800 8.600l1.700 1.700 3-3.200" stroke-linejoin="round"/>
</svg>
<div class="menu"><span style="left:-1px">nsert</span><span style="left:39px">Format</span><span style="left:91px">Data</span><span style="left:131px">Tools</span><span style="left:173px">Gemini</span><span style="left:224px">Extensions</span><span style="left:296px">Help</span></div>
<!-- right controls -->
<svg class="abs" style="left:1418px;top:2px" width="130" height="22" viewBox="0 0 130 22" fill="none" stroke="#444746" stroke-width="1.6">
<path d="M3.500 10.500a7.200 7.200 0 1 1 2.100 5.200 M1.200 7.500l2.300 3.200 3-2.300 M10.500 6.500v4.500l3 1.800" stroke-linecap="round" stroke-linejoin="round"/>
<path d="M45 3.500h14.500v14.300l-3.500-3.300h-11z" stroke-linejoin="round"/><path d="M48 7h8.500M48 9.500h8.500M48 12h8.500" stroke-width="1.100"/>
<path d="M91 5h11.500v11.500h-11.500a1.500 1.500 0 0 1-1.500-1.500v-8.500a1.500 1.500 0 0 1 1.500-1.500z M102.500 9.500l4.200-3.300v9.100l-4.200-3.300" stroke-linejoin="round"/>
<path d="M114.500 9.500h6l-3 3.200z" fill="#444746" stroke="none"/>
</svg>
<div class="abs" style="left:1559px;top:-10px;width:104px;height:40px;border-radius:20px;background:#c2e7ff"></div>
<div class="abs" style="left:1634px;top:-10px;width:1.500px;height:40px;background:#f9fbfd"></div>
<svg class="abs" style="left:1573px;top:4px" width="14" height="17" viewBox="0 0 14 17" fill="none" stroke="#001d35" stroke-width="1.500"><rect x="2" y="6.500" width="10" height="8.500" rx="1.200"/><path d="M4.300 6.500v-2a2.700 2.700 0 0 1 5.400 0v2"/><circle cx="7" cy="10.800" r="1.100" fill="#001d35" stroke="none"/></svg>
<div class="abs" style="left:1594px;top:5px;font-size:12.200px;font-weight:400;color:#0b4a7a;-webkit-text-stroke:.35px #0b4a7a">Share</div>
<div class="car" style="left:1645.500px;top:11.500px;border-top-color:#001d35"></div>
<svg class="abs" style="left:1676px;top:3px" width="20" height="20" viewBox="0 0 20 20"><path d="M10 1.500c.6 5 3.500 7.900 8.500 8.500-5 .6-7.900 3.500-8.500 8.500-.6-5-3.500-7.900-8.500-8.500 5-.6 7.900-3.500 8.500-8.500z" fill="#1f1f1f"/></svg>
<div class="abs" style="left:1713px;top:0;width:26px;height:26px;border-radius:13px;background:#5c6bc0;color:#fff;font-size:14px;line-height:26px;text-align:center">I</div>
<!-- toolbar -->
<div id="tb"></div>
<div id="tbi">
<svg style="left:0;top:10px" width="20" height="18" viewBox="0 0 20 18" fill="none" stroke="#444746" stroke-width="1.500"><path d="M4.800 5.500v-2.200h7.400v2.200 M4.800 10.200h-2.100v-4.200a.8.800 0 0 1 .8-.8h10a.8.800 0 0 1 .8.800v4.200h-2.100 M4.800 8.800h7.400v4.700h-7.400z" stroke-linejoin="round"/></svg>
<svg style="left:27px;top:9px" width="16" height="20" viewBox="0 0 16 20" fill="none" stroke="#444746" stroke-width="1.500"><path d="M3.200 2.800h9v3.200h-9z M12.200 4.400h1.600v3.800h-6v3" stroke-linejoin="round"/><rect x="6.600" y="11.500" width="2.600" height="5.200" rx=".6"/></svg>
<div class="t" style="left:56px;top:10.500px;font-size:11.700px">100%</div><div class="car" style="left:98.500px;top:16.300px"></div>
<div class="sep" style="left:116px"></div>
<div class="t" style="left:129.500px;top:9px;font-size:11.500px">$</div>
<div class="t" style="left:155px;top:9px;font-size:11.500px">%</div>
<div class="t" style="left:180px;top:8.500px;font-size:10.500px;font-weight:700">.0</div>
<svg style="left:187px;top:20px" width="8" height="6" viewBox="0 0 8 6" fill="none" stroke="#444746" stroke-width="1.100"><path d="M7 3h-6M3 .8l-2.200 2.200 2.200 2.200"/></svg>
<div class="t" style="left:207px;top:8.500px;font-size:10.500px;font-weight:700">.00</div>
<svg style="left:213.500px;top:20px" width="8" height="6" viewBox="0 0 8 6" fill="none" stroke="#444746" stroke-width="1.100"><path d="M.5 3h6M4.500 .8l2.200 2.200-2.200 2.200"/></svg>
<div class="t" style="left:234px;top:11px;font-size:10px;letter-spacing:-.55px">123</div>
<div class="sep" style="left:258px"></div>
<div class="t" style="left:272px;top:9.500px;font-size:11.700px">Defaul...</div><div class="car" style="left:328px;top:16.300px"></div>
<div class="sep" style="left:347px"></div>
<div class="abs" style="left:356.500px;top:16.400px;width:9px;height:1.100px;background:#444746"></div>
<div class="abs" style="left:374px;top:7.300px;width:29px;height:19.600px;border:1px solid #444746;border-radius:3.500px;font-size:12px;color:#444746;text-align:center;line-height:18px">10</div>
<div class="abs" style="left:410.500px;top:16.400px;width:9px;height:1.100px;background:#444746"></div><div class="abs" style="left:414.450px;top:12.500px;width:1.100px;height:9px;background:#444746"></div>
<div class="sep" style="left:429px"></div>
<div class="t" style="left:440.500px;top:10px;font-size:12px;font-weight:700">B</div>
<div class="t" style="left:468px;top:9.500px;font-size:12.500px;font-style:italic;font-weight:700">I</div>
<svg style="left:491px;top:10px" width="16" height="15" viewBox="0 0 16 15" fill="none" stroke="#444746" stroke-width="1.300"><path d="M1.500 7.500h13"/><path d="M10.600 4.800c-.2-1.300-1.200-2-2.600-2s-2.600.7-2.600 1.900c0 .5.200.9.500 1.200M5.300 10c.2 1.300 1.200 2.100 2.700 2.100s2.700-.7 2.700-2c0-.4-.1-.7-.3-1"/></svg>
<div class="t" style="left:523px;top:9.500px;font-size:12px">A</div><div class="abs" style="left:518px;top:22px;width:19px;height:3px;background:#000"></div>
<div class="sep" style="left:544px"></div>
<svg style="left:553px;top:8px" width="18" height="13" viewBox="0 0 18 13" fill="#444746"><path d="M4 1.200l5.800 5.800-4.200 4.200a.9.900 0 0 1-1.300 0l-3.500-3.500a.9.900 0 0 1 0-1.300l4.200-4.200-1.500-1.500.9-.9z M2.300 7.300h5.600l-2.800-2.800z" fill-rule="evenodd"/><path d="M12.300 8.500s1.400 1.600 1.400 2.500a1.400 1.400 0 0 1-2.800 0c0-.9 1.400-2.500 1.400-2.500z"/></svg><div class="abs" style="left:552px;top:22px;width:19px;height:3px;background:#fff"></div>
<svg style="left:583.500px;top:11.500px" width="13" height="13" viewBox="0 0 13 13" fill="none" stroke="#444746" stroke-width="1.400"><rect x=".9" y=".9" width="11.200" height="11.200"/><path d="M6.500 .9v11.200M.9 6.500h11.200"/></svg>
<svg style="left:611.500px;top:11.500px" width="14" height="13" viewBox="0 0 14 13" fill="none" stroke="#444746" stroke-width="1.400"><path d="M4.200 1h-3v3M9.800 1h3v3M4.200 12h-3v-3M9.800 12h3v-3M.8 6.500h4M13.200 6.500h-4M3.300 4.800l1.700 1.700-1.700 1.700M10.700 4.800l-1.700 1.700 1.700 1.700" /></svg>
<div class="car" style="left:632.500px;top:16.300px"></div>
<div class="sep" style="left:645.500px"></div>
<svg style="left:653.500px;top:11px" width="13" height="13" viewBox="0 0 13 13" fill="none" stroke="#444746" stroke-width="1.300"><path d="M.5 1h12M3.500 4.500h9M.5 8h12M3.500 11.500h9"/></svg>
<div class="car" style="left:671.200px;top:16.300px"></div>
<svg style="left:688px;top:11px" width="12" height="13" viewBox="0 0 12 13" fill="none" stroke="#444746" stroke-width="1.300"><path d="M1 11.800h10M6 .8v8M2.800 5.800l3.200 3.200 3.200-3.200"/></svg>
<div class="car" style="left:706px;top:16.300px"></div>
<svg style="left:723px;top:11.500px" width="12" height="12" viewBox="0 0 12 12" fill="none" stroke="#444746" stroke-width="1.300"><path d="M1 .8v10.400M4.300 .8v2.500M4.300 8.700v2.500M3.500 6h6.500M7.600 3.400l2.600 2.600-2.600 2.600"/></svg>
<div class="car" style="left:740.300px;top:16.300px"></div>
<div class="t" style="left:759.500px;top:8.500px;font-size:11.500px">A</div>
<svg style="left:758px;top:20.500px" width="12" height="6" viewBox="0 0 12 6" fill="none" stroke="#444746" stroke-width="1.200"><path d="M.5 2.200h9.500M8 .3l2.200 1.900-2.200 1.900"/></svg>
<div class="car" style="left:774.700px;top:16.300px"></div>
<div class="sep" style="left:788px"></div>
<svg style="left:798.500px;top:13.500px" width="14" height="8" viewBox="0 0 14 8" fill="none" stroke="#444746" stroke-width="1.500"><path d="M6 .9h-2.500a3 3 0 0 0 0 6.200h2.500M8 .9h2.500a3 3 0 0 1 0 6.200h-2.500M4.200 4h5.600"/></svg>
<svg style="left:824.500px;top:10px" width="15" height="15" viewBox="0 0 15 15" fill="none" stroke="#444746" stroke-width="1.400"><path d="M1 1h13v10h-10.300l-2.700 2.600z" stroke-linejoin="round"/><path d="M7.500 3.300v5.400M4.800 6h5.400"/></svg>
<svg style="left:853px;top:11.500px" width="13" height="13" viewBox="0 0 13 13" fill="none" stroke="#444746" stroke-width="1.400"><rect x=".9" y=".9" width="11.200" height="11.200" rx="1"/><path d="M3.800 10v-4M6.500 10v-6.500M9.200 10v-2"/></svg>
<div class="abs" style="left:874px;top:4px;width:25px;height:26px;border-radius:4px;background:#d3e3fd"></div>
<svg style="left:880px;top:12px" width="12" height="11" viewBox="0 0 12 11"><path d="M.3 .3h11.400l-4.400 5.300v4.900h-2.600v-4.900z" fill="#041e49"/></svg>
<svg style="left:904.500px;top:10.500px" width="14" height="14" viewBox="0 0 14 14" fill="none" stroke="#444746" stroke-width="1.300"><path d="M1 10.500v-9.500h9.500" /><rect x="3.500" y="3.500" width="10" height="10" rx="1"/><path d="M3.500 7h10M3.500 10.200h10M6.800 7v6.500M10.200 7v6.500" stroke-width="1"/></svg>
<div class="car" style="left:923px;top:16.300px"></div>
<svg style="left:944px;top:12.500px" width="9" height="11" viewBox="0 0 9 11" fill="none" stroke="#444746" stroke-width="1.500"><path d="M8.200 2.300v-1.500h-7.200l4 4.700-4 4.700h7.200v-1.500" stroke-linejoin="miter"/></svg>
<svg style="left:1714px;top:14.500px" width="11" height="7" viewBox="0 0 11 7" fill="none" stroke="#444746" stroke-width="1.500"><path d="M1 6l4.500-4.500 4.500 4.500"/></svg>
</div>
</div>

<div class="abs" style="left:1720px;top:236px;width:40px;height:764px;background:linear-gradient(90deg,rgba(0,0,0,.2),rgba(0,0,0,.06) 68%,rgba(0,0,0,0));-webkit-mask-image:linear-gradient(180deg,transparent 0,rgba(0,0,0,.38) 3%,#000 100%);mask-image:linear-gradient(180deg,transparent 0,rgba(0,0,0,.38) 3%,#000 100%)"></div>
<div class="abs" style="left:652px;top:236px;width:40px;height:764px;background:linear-gradient(270deg,rgba(0,0,0,.2),rgba(0,0,0,.06) 68%,rgba(0,0,0,0));-webkit-mask-image:linear-gradient(180deg,transparent 0,rgba(0,0,0,.38) 3%,#000 100%);mask-image:linear-gradient(180deg,transparent 0,rgba(0,0,0,.38) 3%,#000 100%)"></div>
<div id="win"><div id="wo">
<!-- tab bar -->
<div class="abs" style="left:692px;top:244px;width:1027px;height:54px;background:#eaeaed"></div>
<div class="abs" style="left:787px;top:244px;width:1px;height:54px;background:#cfcfd6"></div>
<svg class="abs" style="left:752px;top:260px" width="22" height="22" viewBox="0 0 22 22" fill="none" stroke="#5b5b66" stroke-width="1.500"><path d="M5 2.800h12" stroke-linecap="round"/><rect x="1.800" y="6" width="18.400" height="13.500" rx="2.500"/><path d="M8.300 11h5.400" stroke-linecap="round"/></svg>
<svg class="abs" style="left:802px;top:260px" width="22" height="22" viewBox="0 0 22 22"><defs><linearGradient id="ffa" x1=".8" y1=".1" x2=".25" y2=".95"><stop offset="0" stop-color="#fff36b"/><stop offset=".3" stop-color="#ffb52e"/><stop offset=".62" stop-color="#ff6a3a"/><stop offset="1" stop-color="#f0318b"/></linearGradient><radialGradient id="ffb" cx=".6" cy=".3" r=".8"><stop offset="0" stop-color="#b070ff"/><stop offset="1" stop-color="#5b4fe0"/></radialGradient></defs><path d="M12.300 .7c2.200 1.600 3 3.300 3.200 4.800 2.600 1.800 4.300 4.400 4.300 7.300a9.300 9.300 0 0 1-18.600 0c0-2.800.9-5 2.300-6.600l.3 1.600c.6-.9 1.500-1.500 2.500-1.900 1.600-.7 3.400-.6 4.700-.1-.2-1.700.3-3.600 1.300-5.100z" fill="url(#ffa)"/><circle cx="10.400" cy="11.600" r="4.300" fill="url(#ffb)"/><path d="M3.200 8.200c1.500-1.700 3.700-2.300 5.600-1.800 1.500.4 2.500 1.300 3 2.300-.9-.3-1.800-.2-2.500.2l-1.900.1c1 .4 1.700 1.200 1.700 2.100-.2.900-1.100 1.500-2.300 1.500-1.800 0-3.300-1.200-3.600-4.400z" fill="#ffab2c"/></svg>
<div class="abs" style="left:830px;top:263px;font-size:14.300px;line-height:18px;color:#3f3f49">Нова вкладка</div>
<svg class="abs" style="left:1044px;top:266px" width="10" height="10" viewBox="0 0 10 10" stroke="#2b2a33" stroke-width="1.400"><path d="M1 1l8 8M9 1l-8 8"/></svg>
<div class="abs" style="left:1074px;top:248px;width:277px;height:45px;border-radius:7px;background:#fdfdfe;box-shadow:0 0 3px rgba(0,0,0,.28)"></div>
<div class="abs" style="left:1084px;top:261px;width:20px;height:20px;background:#4864f5;color:#fff;font-weight:700;font-size:15.500px;line-height:20px;padding-left:3px">T<span style="position:absolute;left:13px;top:13px;width:3.500px;height:3.500px;border-radius:2px;background:#ffb400"></span></div>
<div class="abs" style="left:1112px;top:261px;width:210px;height:22px;overflow:hidden;white-space:nowrap;font-size:16px;line-height:21px;color:#3f3f49;-webkit-mask-image:linear-gradient(90deg,#000 88%,transparent 99%);mask-image:linear-gradient(90deg,#000 88%,transparent 99%)">저가 항공권 예약 &amp; 비행기표 가격 비교</div>
<svg class="abs" style="left:1325.500px;top:265.500px" width="10" height="10" viewBox="0 0 10 10" stroke="#2b2a33" stroke-width="1.400"><path d="M1 1l8 8M9 1l-8 8"/></svg>
<svg class="abs" style="left:1365px;top:264px" width="16" height="16" viewBox="0 0 16 16" stroke="#5b5b66" stroke-width="1.300"><path d="M8 .5v15M.5 8h15"/></svg>
<svg class="abs" style="left:1469px;top:266px" width="16" height="10" viewBox="0 0 16 10" fill="none" stroke="#5b5b66" stroke-width="1.300"><path d="M1 1.500l7 7 7-7"/></svg>
<div class="abs" style="left:1570px;top:270px;width:12px;height:1.200px;background:#3b3b44"></div>
<div class="abs" style="left:1627.500px;top:265px;width:11.500px;height:11.500px;border:1.200px solid #3b3b44;border-radius:1.500px"></div>
<svg class="abs" style="left:1684px;top:264.500px" width="13" height="13" viewBox="0 0 13 13" stroke="#3b3b44" stroke-width="1.200"><path d="M.8 .8l11.400 11.400M12.200 .8l-11.400 11.400"/></svg>
<!-- nav bar -->
<div class="abs" style="left:692px;top:298px;width:1027px;height:51px;background:#f9f9fb"></div>
<svg class="abs" style="left:711px;top:311px" width="26" height="24" viewBox="0 0 26 24" fill="none"><rect x="1.800" y="5.200" width="17.400" height="14.600" rx="2.500" stroke="#4a4a55" stroke-width="1.700"/><path d="M1.800 7.700a2.500 2.500 0 0 1 2.500-2.500h2v14.600h-2a2.500 2.500 0 0 1-2.500-2.500z" fill="#4a4a55"/><circle cx="21.300" cy="3.200" r="2.800" fill="#0a9df0"/></svg>
<svg class="abs" style="left:755px;top:314px" width="20" height="18" viewBox="0 0 20 18" fill="none" stroke="#3b3b44" stroke-width="1.500" stroke-linecap="round" stroke-linejoin="round"><path d="M18.500 9h-16M9 2l-7 7 7 7"/></svg>
<svg class="abs" style="left:797px;top:314px" width="20" height="18" viewBox="0 0 20 18" fill="none" stroke="#b9b9c0" stroke-width="1.500" stroke-linecap="round" stroke-linejoin="round"><path d="M1.500 9h16M11 2l7 7-7 7"/></svg>
<svg class="abs" style="left:840px;top:312px" width="20" height="20" viewBox="0 0 20 20" fill="none" stroke="#3b3b44" stroke-width="1.500" stroke-linecap="round"><path d="M17.500 10.500a7.500 7.500 0 1 1-2.400-5.800"/><path d="M16.800 1.800v4.400h-4.400z" fill="#3b3b44" stroke-linejoin="round"/></svg>
<div class="abs" style="left:900px;top:303px;width:552px;height:40px;border-radius:9px;background:#f0f0f4"></div>
<svg class="abs" style="left:911px;top:312px" width="20" height="22" viewBox="0 0 20 22" fill="none" stroke="#4a4a55" stroke-width="1.500" stroke-linejoin="round"><path d="M10 1.800c2.600 1.700 5 2.300 7.800 2.400v5.300c0 4.700-3.300 8.600-7.800 10.500-4.500-1.900-7.800-5.800-7.800-10.500v-5.300c2.800-.1 5.200-.7 7.800-2.400z"/></svg>
<svg class="abs" style="left:947px;top:311px" width="18" height="22" viewBox="0 0 18 22" fill="none" stroke="#4a4a55" stroke-width="1.500"><rect x="2" y="9.500" width="14" height="10.500" rx="2"/><path d="M5 9.500v-3a4 4 0 0 1 8 0v3"/></svg>
<div class="abs" style="left:978px;top:311px;width:330px;height:26px;overflow:hidden;white-space:nowrap;font-size:17.600px;line-height:25px;color:#84848e;-webkit-mask-image:linear-gradient(90deg,#000 89%,transparent 97%);mask-image:linear-gradient(90deg,#000 89%,transparent 97%)">kr.<span style="color:#15141a">trip.com</span>/flights/ShowFareNext?pagesource=list</div>
<svg class="abs" style="left:1295px;top:311px" width="22" height="22" viewBox="0 0 22 22" fill="none" stroke="#4a4a55" stroke-width="1.500" stroke-linejoin="round"><path d="M7 3.500h-3a2 2 0 0 0-2 2v11.500a2 2 0 0 0 2 2h14a2 2 0 0 0 2-2v-11.500a2 2 0 0 0-2-2h-3M2 14.500h18M11 2v8.500M7.500 7.500l3.500 3.500 3.500-3.500"/></svg>
<div class="abs" style="left:1330px;top:309px;font-size:16px;line-height:20px;color:#3b3b44;font-family:'Noto Sans CJK SC','Liberation Sans',sans-serif">文</div>
<div class="abs" style="left:1340px;top:317px;font-size:15px;line-height:18px;font-weight:700;color:#3b3b44">A</div>
<div class="abs" style="left:1364px;top:311px;width:44px;height:25px;border-radius:6px;background:#fff;font-size:12.800px;line-height:25px;text-align:center;color:#15141a">50%</div>
<svg class="abs" style="left:1421px;top:311px" width="24" height="23" viewBox="0 0 24 23" fill="none" stroke="#4a4a55" stroke-width="1.500" stroke-linejoin="round"><path d="M12 2.200l2.900 6.300 6.900.8-5.100 4.700 1.400 6.800-6.100-3.500-6.100 3.500 1.400-6.800-5.100-4.700 6.900-.8z"/></svg>
<div class="abs" style="left:1484px;top:303px;width:92px;height:40px;border-radius:9px;border:1px solid #dcdce1;background:#fbfbfd"></div>
<svg class="abs" style="left:1493px;top:312px" width="21" height="21" viewBox="0 0 21 21" fill="none" stroke="#3b3b44" stroke-width="1.500"><circle cx="10.500" cy="10.500" r="9"/><circle cx="10.500" cy="8.300" r="3" fill="#3b3b44" stroke="none"/><path d="M4.300 15.800c1.400-2.300 3.600-3.200 6.200-3.200s4.800.9 6.200 3.200c-1.600 2-3.800 3-6.200 3s-4.600-1-6.200-3z" fill="#3b3b44" stroke="none"/></svg>
<div class="abs" style="left:1521px;top:313px;font-size:15.100px;line-height:20px;color:#15141a">Увійти</div>
<svg class="abs" style="left:1589px;top:311px" width="22" height="23" viewBox="0 0 22 23" fill="none" stroke="#3b3b44" stroke-width="1.500" stroke-linejoin="round"><path d="M8 5.500v-1.300a2.300 2.300 0 0 1 4.600 0v1.300h4.400a1.500 1.500 0 0 1 1.500 1.500v12.500a1.500 1.500 0 0 1-1.500 1.500h-11.500a1.500 1.500 0 0 1-1.500-1.500v-4h1.600a2.300 2.300 0 0 0 0-4.600h-1.600v-3.900a1.500 1.500 0 0 1 1.500-1.500z"/></svg>
<div class="abs" style="left:1629px;top:313px;width:24px;height:17px;background:linear-gradient(90deg,#f2f2f4,#e2e2e6)"></div>
<div class="abs" style="left:1640px;top:311px;width:11px;height:3.500px;background:#2fb33a"></div><div class="abs" style="left:1643.800px;top:307px;width:3.500px;height:11px;background:#2fb33a"></div>
<div class="abs" style="left:1681px;top:316px;width:16px;height:1.500px;background:#3b3b44;box-shadow:0 6px 0 #3b3b44,0 12px 0 #3b3b44"></div>
<!-- page bg -->
<div class="abs" style="left:692px;top:349px;width:1027px;height:95px;background:linear-gradient(90deg,#13276b 0%,#112362 35%,#0a1a55 100%)"></div>
<div class="abs" style="left:692px;top:422px;width:1027px;height:580px;background:#5f6062;border-radius:13px 13px 0 0"></div>
<div class="abs" style="left:712px;top:358px;font-size:18.700px;font-weight:700;line-height:22px;color:#797979;letter-spacing:-.1px">Trip<span style="color:#a87c1e">.</span>com</div>
<div class="pn" style="left:810px">숙소</div><div class="pn" style="left:850px">항공권</div><div class="abs" style="left:850px;top:379px;width:30px;height:1.300px;background:#7d86a3"></div>
<div class="pn" style="left:900px">투어&amp;티켓</div><div class="pn" style="left:966px">항공 + 호텔</div><div class="pn" style="left:1037px">기차표</div><div class="pn" style="left:1087px">렌터카·공항픽업</div><div class="pn" style="left:1179.500px">보험</div><div class="pn" style="left:1219.500px">프라이빗 투어</div><div class="pn" style="left:1302.500px">크루즈</div>
<div class="pn" style="left:1352px;font-weight:700;letter-spacing:.5px">•••</div>
<div class="abs" style="left:1457px;top:365px;width:6.500px;height:10.500px;border:1.300px solid #7a7a7a;border-radius:1.500px"></div>
<div class="pn" style="left:1468px;color:#7d7d7d">앱</div>
<div class="abs" style="left:1494px;top:363px;width:14px;height:14px;border-radius:7px;background:#777;overflow:hidden"><div style="position:absolute;left:4px;top:4px;width:6px;height:3px;background:#7a2430;border-radius:3px 3px 0 0"></div><div style="position:absolute;left:4px;top:7px;width:6px;height:3px;background:#1f2f66;border-radius:0 0 3px 3px"></div></div>
<div class="pn" style="left:1522px;color:#7d7d7d;font-size:9.400px">고객센터</div><div class="pn" style="left:1571.500px;color:#7d7d7d;font-size:9.400px">예약 검색</div>
<div class="abs" style="left:1617px;top:359px;width:80px;height:21px;border-radius:2.500px;background:#787878;color:#151515;font-size:9.500px;line-height:20px;text-align:center;white-space:nowrap">로그인 / 회원가입</div>
<!-- panels -->
<div class="abs" style="left:843px;top:391px;width:725px;height:80px;border-radius:6px;background:#6b6b6c"></div>
<div class="abs" style="left:859.500px;top:406.500px;width:8px;height:8px;border-radius:4px;border:1px solid #2a3f9a;background:radial-gradient(#1c2f8f 45%,#6b6b6c 50%)"></div>
<div class="abs" style="left:868.500px;top:404px;font-size:9.500px;line-height:13px;color:#111">왕복</div>
<div class="abs" style="left:853px;top:425px;width:300px;height:35px;border:1px solid #7b7b7c;border-radius:3px"></div>
<div class="abs" style="left:860px;top:431.500px;width:200px;height:24px;background:#65666c"></div>
<div class="abs" style="left:865px;top:433px;font-size:9.500px;font-weight:700;line-height:13px;color:#0c0c0c">부산</div>
<div class="abs" style="left:865px;top:443.500px;font-size:8.500px;line-height:13px;color:#3f4049">모든 공항</div>
<div class="abs" style="left:1478px;top:425px;width:80px;height:35px;border-radius:3px;background:#17308e;color:#70748a;font-size:10px;font-weight:700;line-height:34px;text-align:right;padding-right:16px">검색</div>
<div class="abs" style="left:843px;top:500px;width:725px;height:82px;border-radius:6px;background:#686869"></div>
<div class="abs" style="left:849px;top:505px;font-size:9.500px;line-height:10.500px;color:#0e0e0e;width:300px">다음 항공편을 선택하<br>시겠어요?</div>
<div class="abs" style="left:849px;top:534px;width:60px;height:16px;border:1px solid #7a7a7a;border-radius:2px;font-size:9.300px;line-height:14px;color:#0e0e0e;padding-left:3px">직항 ×</div>
<div class="abs" style="left:1520px;top:481px;width:48px;height:34px;border-radius:4px;background:#666667"></div>
<div class="abs" style="left:1528px;top:490.500px;font-size:9.300px;line-height:13px;color:#152f8c;white-space:nowrap">⇄ 변경</div>
<div class="abs" style="left:1500px;top:551px;width:68px;height:50px;border-radius:5px;background:linear-gradient(180deg,#1a2f82,#24409a)"></div>
<div class="abs" style="left:1500px;top:603px;width:68px;height:37px;background:#666667"></div>
<div class="abs" style="left:1519px;top:614.500px;font-size:9.500px;font-weight:700;line-height:13px;color:#13277a;white-space:nowrap">신청하기</div>
<div class="abs" style="left:1500px;top:642px;width:68px;height:68px;background:#666667"></div>
<div class="abs" style="left:1530px;top:666.500px;width:28px;height:13px;background:#8a1d22;color:#8d7a7a;font-size:8.500px;line-height:12.500px;text-align:right;padding-right:1px;white-space:nowrap">석 남음</div>
<div class="abs" style="left:1518px;top:680.500px;width:40px;height:16px;border-radius:2px;background:#17308e"></div>
<svg class="abs" style="left:1539px;top:684px" width="6" height="9" viewBox="0 0 6 9" fill="none" stroke="#8a8fa8" stroke-width="1.100"><path d="M1 1l3.500 3.500-3.500 3.500"/></svg>
<div class="abs" style="left:1500px;top:713px;width:68px;height:68px;background:#666667"></div>
<div class="abs" style="left:1530px;top:738px;width:28px;height:13px;background:#8a1d22;color:#8d7a7a;font-size:8.500px;line-height:12.500px;text-align:right;padding-right:1px;white-space:nowrap">석 남음</div>
<div class="abs" style="left:1518px;top:752px;width:40px;height:16px;border-radius:2px;background:#17308e"></div>
<svg class="abs" style="left:1539px;top:755.500px" width="6" height="9" viewBox="0 0 6 9" fill="none" stroke="#8a8fa8" stroke-width="1.100"><path d="M1 1l3.500 3.500-3.500 3.500"/></svg>
<div class="abs" style="left:1500px;top:784px;width:68px;height:107.500px;background:#666667"></div>
<div class="abs" style="left:1500px;top:841px;width:58px;height:22px;border:1px solid #1c368f;border-radius:2px;background:#676768"></div>
<!-- floating buttons -->
<div class="abs" style="left:1624px;top:839px;width:38px;height:37px;border-radius:2px;background:#142768"></div>
<div class="abs" style="left:1624px;top:878.500px;width:38px;height:37px;border-radius:2px;background:#142768"></div>
<div class="abs" style="left:1624px;top:918px;width:38px;height:37px;border-radius:2px;background:#142768"></div>
<svg class="abs" style="left:1633px;top:848px" width="20" height="18" viewBox="0 0 20 18"><path d="M11 1.500l8 7-8 7v-4.200c-4.500 0-7.500 1.200-10 4.700.8-5 3.800-9.300 10-10.200z" fill="#737477"/></svg>
<svg class="abs" style="left:1634.500px;top:887.500px" width="18" height="18" viewBox="0 0 18 18" fill="none" stroke="#737477"><path d="M3 10v-1.500a6 6 0 0 1 12 0v1.500" stroke-width="2.600"/><rect x="1" y="8.500" width="4.200" height="6.500" rx="1" fill="#737477" stroke="none"/><rect x="12.800" y="8.500" width="4.200" height="6.500" rx="1" fill="#737477" stroke="none"/><path d="M15.500 14.500v.8a2 2 0 0 1-2 2h-3" stroke-width="1.500"/><rect x="8" y="15.800" width="3.600" height="2.200" rx="1" fill="#737477" stroke="none"/></svg>
<svg class="abs" style="left:1636px;top:928px" width="14" height="17" viewBox="0 0 14 17"><rect x="0" y="0" width="14" height="17" rx="1.800" fill="#737477"/><rect x="2" y="2" width="10" height="10.500" fill="#142768"/><rect x="5.800" y="14" width="2.400" height="1.300" rx=".6" fill="#142768"/></svg>
<!-- left filter column -->
<div class="abs" style="left:843px;top:594px;font-size:12.900px;line-height:18px;color:#141414;white-space:nowrap">필터(1)</div>
<div class="abs" style="left:843px;top:621px;width:60px;height:15px;background:#6b6b6c;font-size:9.200px;line-height:14px;color:#0e0e0e;padding-left:3px;white-space:nowrap">직항 <span style="color:#888">✕</span></div>
<div class="abs" style="left:843px;top:648px;width:120px;height:1px;background:#747475"></div>
<div class="pf" style="top:663px">추천</div>
<div class="cb" style="top:686px;background:#0a0a0a"></div><svg class="abs" style="left:847.500px;top:689px" width="8" height="7" viewBox="0 0 8 7" fill="none" stroke="#8a8a8a" stroke-width="1.300"><path d="M1 3.500l2 2 4-4.500"/></svg>
<div class="cb" style="top:707px"></div><div class="cb" style="top:729px"></div>
<svg class="abs" style="left:862px;top:688px" width="9" height="9" viewBox="0 0 9 9"><path d="M.5 5.500l8-3-1.500 1.800-2 .8-1.500 2.400-.8.200.5-2-1.700.6z" fill="#0b5a5c"/></svg><div class="abs" style="left:872px;top:688px;font-size:8.500px;line-height:10px;color:#0b5a5c;white-space:nowrap;text-decoration:underline">직항</div>
<svg class="abs" style="left:863px;top:708px" width="8" height="10" viewBox="0 0 8 10" fill="none" stroke="#0b5a5c" stroke-width="1.100"><rect x="1" y="2.500" width="6" height="6.500" rx="1"/><path d="M3 2.500v-1.500h2v1.500"/></svg>
<svg class="abs" style="left:863px;top:730px" width="8" height="10" viewBox="0 0 8 10" fill="none" stroke="#0b5a5c" stroke-width="1.100"><path d="M4 9c-2-2-3-3.300-3-5a3 3 0 0 1 6 0c0 1.700-1 3-3 5z"/></svg>
<div class="abs" style="left:843px;top:778px;width:120px;height:1px;background:#747475"></div>
<div class="pf" style="top:793px">얼라이언스</div>
<div class="cb" style="top:813px"></div><div class="cb" style="top:835px"></div>
<div class="abs" style="left:862.500px;top:813px;width:12px;height:12px;border-radius:6px;border:1px solid #6f7f8f;background:#59616b"></div>
<div class="abs" style="left:862.500px;top:835px;width:12px;height:12px;border-radius:6px;color:#737477;font-size:10px;line-height:12px">✩</div>
<div class="abs" style="left:843px;top:861px;width:120px;height:1px;background:#747475"></div>
<div class="pf" style="top:876px">항공사</div>
<div class="abs" style="left:843px;top:899px;width:110px;height:22px;border:1px solid #2b2b2c;border-radius:2px;font-size:9.300px;line-height:20px;color:#151515;padding-left:6px;white-space:nowrap">항공사 검색</div>
<div class="cb" style="top:932px"></div><div class="cb" style="top:953px"></div><div class="cb" style="top:975px"></div>
<div class="abs" style="left:863px;top:932px;width:12px;height:12px;background:#2f6f9a;border-radius:1px"></div><div class="abs" style="left:865px;top:934px;width:8px;height:8px;border-radius:4px;border:1.200px solid #0f2f5a"></div>
<svg class="abs" style="left:863px;top:955px" width="12" height="9" viewBox="0 0 12 9"><path d="M0 8.500h12c-1-.6-2.200-1-3.300-1.100l2.300-3.200-3.400 2 .3-4-1.900 3.600-1.900-3.600.3 4-3.400-2 2.300 3.200c-1.100.1-2.300.5-3.300 1.100z" fill="#8f7a1f"/></svg>
<div class="abs" style="left:863px;top:975px;width:12px;height:12px;background:#8a1f22;border-radius:1px;color:#999;font-size:10px;font-weight:700;line-height:11px;text-align:center">t</div>
<div class="abs" style="left:880px;top:973px;font-size:9.100px;line-height:14px;color:#0c0c0c;white-space:nowrap">티웨이항공 (1)</div>
<div class="abs" style="left:978px;top:973px;font-size:8.800px;line-height:14px;color:#2e2e30;white-space:nowrap;letter-spacing:-.2px">718,150원</div>
<div class="abs" style="left:874px;top:379px;width:663px;height:596px;background:#fff;border-radius:5px"></div>
<div class="abs" style="left:874px;top:536px;width:663px;height:373px;background:#f5f7fa"></div>
<div class="mt" style="left:895px;top:397.8px;font-size:15.2px;line-height:22px;color:#0f294d;">부산</div>
<svg class="abs" style="left:929.500px;top:402px" width="16" height="12" viewBox="0 0 16 12" fill="none" stroke="#0f294d" stroke-width="1.600"><path d="M1 4.200h13.500l-3.800-3.500M15 7.800h-13.500l3.800 3.500"/></svg>
<svg class="abs" style="left:1509.500px;top:399.500px" width="11" height="11" viewBox="0 0 11 11" stroke="#0f294d" stroke-width="1.300"><path d="M.8 .8l9.400 9.400M10.200 .8l-9.400 9.400"/></svg>
<div class="abs" style="left:894px;top:439px;width:37px;height:16px;border-radius:2.500px;background:#0f294d;color:#fff;font-weight:700;font-size:9.500px;line-height:15.500px;text-align:center;white-space:nowrap">가는편</div>
<div class="mt" style="left:935.5px;top:440.0px;font-size:9.2px;line-height:14px;color:#0f294d;">2월 25일(수)</div>
<div class="abs" style="left:990.3px;top:443px;width:1px;height:8px;background:#d5d9e0"></div>
<div class="mt" style="left:995.8px;top:440.0px;font-size:9.2px;line-height:14px;color:#0f294d;">소요시간 4시간 50분</div>
<div class="mt" style="left:895px;top:466.6px;font-size:10.4px;line-height:14px;color:#0f294d;font-weight:700;">08:05</div>
<div class="mt" style="left:895px;top:508.8px;font-size:10.4px;line-height:14px;color:#0f294d;font-weight:700;">10:55</div>
<div class="abs" style="left:937.2px;top:471px;width:2px;height:46px;background:#cfd4e1"></div>
<div class="mt" style="left:955.2px;top:466.6px;font-size:10.3px;line-height:14px;color:#0f294d;font-weight:700;">PUS 부산 김해국제공항 I</div>
<div class="mt" style="left:955.2px;top:508.8px;font-size:10.3px;line-height:14px;color:#0f294d;font-weight:700;">CXR 나트랑 깜라인 국제공항 T2</div>
<div class="mt" style="left:955.2px;top:483.7px;font-size:9.42px;line-height:14px;color:#8592a6;">베트남항공</div>
<div class="mt" style="left:1004.2px;top:483.7px;font-size:8.5px;line-height:14px;color:#8592a6;">VN435</div>
<div class="mt" style="left:1035.0px;top:483.7px;font-size:9.42px;line-height:14px;color:#8592a6;">에어버스 <span style="font-size:8.500px">A321</span></div>
<div class="mt" style="left:1095.6000000000001px;top:483.7px;font-size:9.42px;line-height:14px;color:#8592a6;">일반석</div>
<svg class="abs" style="left:901.8px;top:490.300px" width="12.200" height="7.700" viewBox="0 0 12.200 7.700"><path d="M6.100 7.600L.3 7.400Q0 6.200 1 5.900L4.600 6.200.9 3.200Q1 2.200 2 2.500L4.800 5 4.200.8Q4.700-.1 5.300.8L6.100 4 6.900.8Q7.500-.1 8 .8L7.400 5 10.200 2.500Q11.200 2.200 11.300 3.200L7.600 6.200 11.200 5.900Q12.200 6.200 11.900 7.400Z" fill="#efb40a"/></svg>
<svg class="abs" style="left:1126.5px;top:486px" width="20" height="10" viewBox="0 0 20 10" fill="#12868a"><path d="M1 .5v3.200c0 .8.500 1.300 1.200 1.400v4.400h1.300v-4.400c.7-.1 1.200-.6 1.200-1.400v-3.200h-.8v2.800h-.7v-2.800h-.7v2.800h-.7v-2.800z"/><path d="M6.800 .5c-1 .3-1.500 1.300-1.500 2.600 0 1.100.5 1.800 1.100 2v4.400h1.300v-9z"/><path d="M10.500 2h9v7h-9z M13.800 4v3l2.700-1.500z" fill-rule="evenodd"/></svg>
<div class="abs" style="left:1206px;top:438px;width:0;height:78px;border-left:1px dashed #ccd1db"></div>
<div class="abs" style="left:1220.5px;top:439px;width:37px;height:16px;border-radius:2.500px;background:#0f294d;color:#fff;font-weight:700;font-size:9.500px;line-height:15.500px;text-align:center;white-space:nowrap">오는편</div>
<div class="mt" style="left:1262.0px;top:440.0px;font-size:9.2px;line-height:14px;color:#0f294d;">3월 1일(일)</div>
<div class="abs" style="left:1310.8px;top:443px;width:1px;height:8px;background:#d5d9e0"></div>
<div class="mt" style="left:1316.8px;top:440.0px;font-size:9.2px;line-height:14px;color:#0f294d;">소요시간 4시간 20분</div>
<div class="mt" style="left:1221.5px;top:466.6px;font-size:10.4px;line-height:14px;color:#0f294d;font-weight:700;">23:45</div>
<div class="mt" style="left:1221.5px;top:508.8px;font-size:10.4px;line-height:14px;color:#0f294d;font-weight:700;">06:05</div>
<div class="abs" style="left:1263.7px;top:471px;width:2px;height:46px;background:#cfd4e1"></div>
<div class="mt" style="left:1281.7px;top:466.6px;font-size:10.3px;line-height:14px;color:#0f294d;font-weight:700;">CXR 나트랑 깜라인 국제공항 T2</div>
<div class="mt" style="left:1281.7px;top:508.8px;font-size:10.3px;line-height:14px;color:#0f294d;font-weight:700;">PUS 부산 김해국제공항 I</div>
<div class="mt" style="left:1281.7px;top:483.7px;font-size:9.42px;line-height:14px;color:#8592a6;">베트남항공</div>
<div class="mt" style="left:1330.7px;top:483.7px;font-size:8.5px;line-height:14px;color:#8592a6;">VN434</div>
<div class="mt" style="left:1361.5px;top:483.7px;font-size:9.42px;line-height:14px;color:#8592a6;">에어버스 <span style="font-size:8.500px">A321</span></div>
<div class="mt" style="left:1422.1000000000001px;top:483.7px;font-size:9.42px;line-height:14px;color:#8592a6;">일반석</div>
<svg class="abs" style="left:1228.9px;top:490.300px" width="12.200" height="7.700" viewBox="0 0 12.200 7.700"><path d="M6.100 7.600L.3 7.400Q0 6.200 1 5.900L4.600 6.200.9 3.200Q1 2.200 2 2.500L4.800 5 4.200.8Q4.700-.1 5.300.8L6.100 4 6.900.8Q7.500-.1 8 .8L7.400 5 10.200 2.500Q11.200 2.200 11.300 3.200L7.600 6.200 11.200 5.900Q12.200 6.200 11.900 7.400Z" fill="#efb40a"/></svg>
<div class="mt" style="left:1222.7px;top:498.0px;font-size:8px;line-height:10px;color:#d2561c;">3월 2일</div>
<svg class="abs" style="left:1453.5px;top:486px" width="20" height="10" viewBox="0 0 20 10" fill="#12868a"><path d="M1 .5v3.200c0 .8.500 1.300 1.200 1.400v4.400h1.300v-4.400c.7-.1 1.200-.6 1.200-1.400v-3.200h-.8v2.800h-.7v-2.800h-.7v2.800h-.7v-2.800z"/><path d="M6.800 .5c-1 .3-1.500 1.300-1.500 2.600 0 1.100.5 1.800 1.100 2v4.400h1.300v-9z"/><path d="M10.500 2h9v7h-9z M13.800 4v3l2.700-1.500z" fill-rule="evenodd"/></svg>
<div class="abs" style="left:894px;top:551px;width:201px;height:380px;border:2px solid #0f294d;border-radius:5px;background:#fff"></div>
<div class="mt" style="left:910px;top:568.8px;font-size:13.2px;line-height:20px;color:#0f294d;font-weight:500;">일반석</div>
<div class="abs" style="left:1064.7px;top:572.2px;width:13px;height:13px;border-radius:7px;border:1.500px solid #3264ff"><div style="position:absolute;left:1.750px;top:1.750px;width:6.500px;height:6.500px;border-radius:4px;background:#3264ff"></div></div>
<div class="abs" style="left:910px;top:601px;width:169px;height:1px;background:#e5e9f0"></div>
<div class="mt" style="left:910px;top:606.7px;font-size:9.3px;line-height:14px;color:#0f294d;font-weight:700;">수하물</div>
<svg class="abs" style="left:909.5px;top:626px" width="10" height="10" viewBox="0 0 10 10" fill="none" stroke="#12868a" stroke-width="1"><rect x="2" y="3.500" width="5.500" height="5.500" rx=".8"/><path d="M3.500 3.500v-2h2.500v2M3.300 6h3"/></svg>
<div class="mt" style="left:922.6px;top:624.0px;font-size:9.15px;line-height:14px;color:#0f294d;">휴대 수하물: <b>1개</b></div>
<svg class="abs" style="left:909.5px;top:639px" width="10" height="10" viewBox="0 0 10 10" fill="none" stroke="#12868a" stroke-width="1"><path d="M1.800 3.200l1.200-1.400h3.500a1 1 0 0 1 1 1v5.400a1 1 0 0 1-1 1h-3.700a1 1 0 0 1-1-1z"/><path d="M3.800 1.800v2.500h2v-2.500" /></svg>
<div class="mt" style="left:922.6px;top:637.0px;font-size:9.15px;line-height:14px;color:#0f294d;">위탁 수하물: <b>1 × 23kg</b></div>
<div class="mt" style="left:910px;top:663.6px;font-size:9.3px;line-height:14px;color:#0f294d;font-weight:700;">유연성</div>
<svg class="abs" style="left:909.5px;top:681.7px" width="10" height="10" viewBox="0 0 10 10" fill="none" stroke="#12868a" stroke-width="1"><circle cx="5" cy="4" r="3"/><path d="M1.200 9c.8-1.200 2-1.800 3.800-1.800s3 .6 3.800 1.800zM4 3.300h2M5 3.300v2.500" /></svg>
<div class="mt" style="left:922.6px;top:679.7px;font-size:9.15px;line-height:14px;color:#0f294d;">취소 수수료: 무료 (2026년 2월 24일</div>
<div class="mt" style="left:922.6px;top:690.7px;font-size:9.15px;line-height:14px;color:#0f294d;">16:29:00 이전)</div>
<svg class="abs" style="left:909.5px;top:708.8px" width="10" height="10" viewBox="0 0 10 10" fill="none" stroke="#12868a" stroke-width="1"><circle cx="5" cy="5" r="4"/><path d="M3 4.200h4l-1.200-1.200M7 5.800h-4l1.200 1.200" stroke-width=".9"/></svg>
<div class="mt" style="left:922.6px;top:706.8px;font-size:9.15px;line-height:14px;color:#0f294d;">변경 수수료: 50,000원부터</div>
<div class="mt" style="left:910px;top:733.5px;font-size:9.3px;line-height:14px;color:#0f294d;font-weight:700;">기타 혜택</div>
<svg class="abs" style="left:909.5px;top:752px" width="11" height="10" viewBox="0 0 11 10" fill="#12868a"><path d="M0 4.500l3-1.300c.6-1.200 1.700-1.700 3.500-1.700h4l-.6 1.300h-2.600c2 .3 3.200 1.400 3.200 2.900 0 1.700-1.500 2.800-3.800 2.800s-3.800-1-3.800-2.600c0-.5.100-.9.400-1.300z M6.700 4.200c-1.300 0-2.200.6-2.200 1.500s.9 1.500 2.200 1.500 2.200-.6 2.200-1.500-.9-1.500-2.200-1.500z" fill-rule="evenodd"/></svg>
<div class="mt" style="left:922.6px;top:750.0px;font-size:9.15px;line-height:14px;color:#0f294d;">항공사 마일리지: 최소 1,815</div>
<svg class="abs" style="left:909.5px;top:768px" width="10" height="10" viewBox="0 0 10 10" fill="none" stroke="#12868a" stroke-width="1"><circle cx="5" cy="5" r="4"/><path d="M5 2.800v2.400h2"/></svg>
<div class="mt" style="left:922.6px;top:766.0px;font-size:9.15px;line-height:14px;color:#0f294d;">발권: 결제 후 45분 이내</div>
<div class="mt" style="left:910px;top:860.0px;font-size:13.2px;line-height:18px;color:#3264ff;font-weight:700;border-bottom:1px dashed #3264ff;height:17px;">699,600원</div>
<div class="mt" style="left:910px;top:878.0px;font-size:8.3px;line-height:10px;color:#76839a;">왕복</div>
<div class="abs" style="left:1105.5px;top:551px;width:200px;height:380px;border:1px solid #d9dee6;border-radius:5px;background:#fff"></div>
<div class="abs" style="left:1120.500px;top:546px;width:20.500px;height:14px;background:#0f7c7e;border-radius:1px;color:#fff;font-size:8px;line-height:13.500px;text-align:center;white-space:nowrap">추천</div>
<div class="abs" style="left:1120.500px;top:560px;width:0;height:0;border-top:3px solid #0f7c7e;border-right:3.500px solid transparent"></div>
<div class="mt" style="left:1121px;top:568.8px;font-size:13.2px;line-height:20px;color:#0f294d;font-weight:500;">일반석</div>
<div class="abs" style="left:1275.3px;top:572.2px;width:13px;height:13px;border-radius:7px;border:1.200px solid #55678a"></div>
<div class="abs" style="left:1121px;top:601px;width:169px;height:1px;background:#e5e9f0"></div>
<div class="mt" style="left:1121px;top:606.7px;font-size:9.3px;line-height:14px;color:#0f294d;font-weight:700;">수하물</div>
<svg class="abs" style="left:1120.5px;top:626px" width="10" height="10" viewBox="0 0 10 10" fill="none" stroke="#12868a" stroke-width="1"><rect x="2" y="3.500" width="5.500" height="5.500" rx=".8"/><path d="M3.500 3.500v-2h2.500v2M3.300 6h3"/></svg>
<div class="mt" style="left:1133.6px;top:624.0px;font-size:9.15px;line-height:14px;color:#0f294d;">휴대 수하물: <b>1개</b></div>
<svg class="abs" style="left:1120.5px;top:639px" width="10" height="10" viewBox="0 0 10 10" fill="none" stroke="#12868a" stroke-width="1"><path d="M1.800 3.200l1.200-1.400h3.500a1 1 0 0 1 1 1v5.400a1 1 0 0 1-1 1h-3.700a1 1 0 0 1-1-1z"/><path d="M3.800 1.800v2.500h2v-2.500" /></svg>
<div class="mt" style="left:1133.6px;top:637.0px;font-size:9.15px;line-height:14px;color:#0f294d;">위탁 수하물: <b>1 × 23kg</b></div>
<div class="abs" style="left:1120.5px;top:665px;width:170.5px;height:93px;border-radius:3px;background:linear-gradient(90deg,#e1f4f3 0%,#eef9f8 55%,#fff 100%)"></div>
<div class="mt" style="left:1126px;top:670.1px;font-size:9.4px;line-height:11px;color:#0f7c7e;font-weight:700;">트립플렉스 프로 | 간편 취소/</div>
<div class="mt" style="left:1126px;top:680.7px;font-size:9.4px;line-height:11px;color:#0f7c7e;font-weight:700;">변경</div>
<div class="mt" style="left:1253.5px;top:670.1px;font-size:8.1px;line-height:11px;color:#0f7c7e;border-bottom:1px dashed #0f7c7e;height:10.500px;">5가지 혜택</div>
<svg class="abs" style="left:1125.8px;top:697.7px" width="10" height="10" viewBox="0 0 10 10" fill="none" stroke="#12868a" stroke-width="1"><circle cx="5" cy="5" r="4"/><path d="M3.200 5.100l1.300 1.300 2.400-2.600"/></svg>
<div class="mt" style="left:1138.8px;top:695.7px;font-size:9.15px;line-height:14px;color:#0f294d;">취소수수료: <span style="color:#0f7c7e;font-weight:500">무료</span></div>
<svg class="abs" style="left:1125.8px;top:713.8px" width="10" height="10" viewBox="0 0 10 10" fill="none" stroke="#12868a" stroke-width="1"><circle cx="5" cy="5" r="4"/><path d="M3.200 5.100l1.300 1.300 2.400-2.600"/></svg>
<div class="mt" style="left:1138.8px;top:711.8px;font-size:9.15px;line-height:14px;color:#0f294d;">변경수수료: <span style="color:#0f7c7e;font-weight:500">무료</span> <span style="color:#6b7a90;text-decoration:line-through">최저 50,000원</span></div>
<div class="mt" style="left:1126.7px;top:730.2px;font-size:8.75px;line-height:11px;color:#6b7a90;">* 첫 항공편 출발 전까지 유효합니다. 항공</div>
<div class="mt" style="left:1126.7px;top:741.5px;font-size:8.75px;line-height:11px;color:#6b7a90;">편 변경 시 양도할 수 없습니다.</div>
<div class="mt" style="left:1121px;top:771.7px;font-size:9.3px;line-height:14px;color:#0f294d;font-weight:700;">기타 혜택</div>
<svg class="abs" style="left:1120.5px;top:789.7px" width="11" height="10" viewBox="0 0 11 10" fill="#12868a"><path d="M0 4.500l3-1.300c.6-1.200 1.700-1.700 3.500-1.700h4l-.6 1.300h-2.600c2 .3 3.200 1.400 3.200 2.900 0 1.700-1.500 2.800-3.800 2.800s-3.800-1-3.800-2.600c0-.5.100-.9.400-1.300z M6.700 4.200c-1.300 0-2.200.6-2.200 1.500s.9 1.500 2.200 1.500 2.200-.6 2.200-1.500-.9-1.500-2.200-1.500z" fill-rule="evenodd"/></svg>
<div class="mt" style="left:1133.6px;top:787.7px;font-size:9.15px;line-height:14px;color:#0f294d;">항공사 마일리지: 최소 1,815</div>
<svg class="abs" style="left:1120.5px;top:806px" width="10" height="10" viewBox="0 0 10 10" fill="none" stroke="#12868a" stroke-width="1"><circle cx="5" cy="5" r="4"/><path d="M5 2.800v2.400h2"/></svg>
<div class="mt" style="left:1133.6px;top:804.0px;font-size:9.15px;line-height:14px;color:#0f294d;">발권: 결제 후 45분 이내</div>
<div class="mt" style="left:1121px;top:831.8px;font-size:13.2px;line-height:18px;color:#3264ff;font-weight:700;border-bottom:1px dashed #3264ff;height:17px;">699,600원</div>
<div class="mt" style="left:1121px;top:850.6px;font-size:8.3px;line-height:10px;color:#76839a;">왕복</div>
<div class="mt" style="left:1121px;top:863.7px;font-size:9.3px;line-height:12px;color:#0f7c7e;">+ 54,500원(트립플렉스 프로 | 간편 취소/변</div>
<div class="mt" style="left:1121px;top:876.3px;font-size:9.3px;line-height:12px;color:#0f7c7e;">경)</div>
<div class="abs" style="left:1316.5px;top:551px;width:199px;height:380px;border:1px solid #d9dee6;border-radius:5px;background:#fff"></div>
<div class="mt" style="left:1332px;top:562.8px;font-size:13.2px;line-height:20px;color:#0f294d;font-weight:500;">일반석</div>
<div class="mt" style="left:1332px;top:584.6px;font-size:7.15px;line-height:10px;color:#8592a6;">Economy Lite+Economy Classic</div>
<div class="abs" style="left:1486.5px;top:566.3px;width:13px;height:13px;border-radius:7px;border:1.200px solid #55678a"></div>
<div class="abs" style="left:1332px;top:601px;width:168px;height:1px;background:#e5e9f0"></div>
<div class="mt" style="left:1332px;top:606.7px;font-size:9.3px;line-height:14px;color:#0f294d;font-weight:700;">수하물</div>
<svg class="abs" style="left:1331.5px;top:626px" width="10" height="10" viewBox="0 0 10 10" fill="none" stroke="#12868a" stroke-width="1"><rect x="2" y="3.500" width="5.500" height="5.500" rx=".8"/><path d="M3.500 3.500v-2h2.500v2M3.300 6h3"/></svg>
<div class="mt" style="left:1344.6px;top:624.0px;font-size:9.15px;line-height:14px;color:#0f294d;">휴대 수하물: <b>1개</b></div>
<svg class="abs" style="left:1331.5px;top:639px" width="10" height="10" viewBox="0 0 10 10" fill="none" stroke="#12868a" stroke-width="1"><path d="M1.800 3.200l1.200-1.400h3.500a1 1 0 0 1 1 1v5.400a1 1 0 0 1-1 1h-3.700a1 1 0 0 1-1-1z"/><path d="M3.800 1.800v2.500h2v-2.500" /></svg>
<div class="mt" style="left:1344.6px;top:637.0px;font-size:9.15px;line-height:14px;color:#0f294d;">위탁 수하물: <b>1 × 23kg</b></div>
<div class="mt" style="left:1332px;top:663.6px;font-size:9.3px;line-height:14px;color:#0f294d;font-weight:700;">유연성</div>
<svg class="abs" style="left:1331.5px;top:681.7px" width="10" height="10" viewBox="0 0 10 10" fill="none" stroke="#12868a" stroke-width="1"><circle cx="5" cy="4" r="3"/><path d="M1.200 9c.8-1.200 2-1.800 3.800-1.800s3 .6 3.800 1.800zM4 3.300h2M5 3.300v2.500" /></svg>
<div class="mt" style="left:1344.6px;top:679.7px;font-size:9.15px;line-height:14px;color:#0f294d;">취소 수수료: 무료 (2026년 2월 24일</div>
<div class="mt" style="left:1344.6px;top:690.7px;font-size:9.15px;line-height:14px;color:#0f294d;">16:29:00 이전)</div>
<svg class="abs" style="left:1331.5px;top:708.8px" width="10" height="10" viewBox="0 0 10 10" fill="none" stroke="#12868a" stroke-width="1"><circle cx="5" cy="5" r="4"/><path d="M3 4.200h4l-1.200-1.200M7 5.800h-4l1.200 1.200" stroke-width=".9"/></svg>
<div class="mt" style="left:1344.6px;top:706.8px;font-size:9.15px;line-height:14px;color:#0f294d;">변경 수수료: 50,000원부터</div>
<div class="mt" style="left:1332px;top:733.5px;font-size:9.3px;line-height:14px;color:#0f294d;font-weight:700;">기타 혜택</div>
<svg class="abs" style="left:1331.5px;top:752px" width="10" height="10" viewBox="0 0 10 10" fill="none" stroke="#12868a" stroke-width="1.100"><rect x="1" y=".8" width="2.600" height="3.200" rx=".8"/><rect x="1.200" y="5" width="2.200" height="4.200" rx=".6"/><circle cx="7.300" cy="2.500" r="1.700"/><rect x="6.300" y="5" width="2" height="4.200" rx=".6"/></svg>
<div class="mt" style="left:1344.6px;top:750.0px;font-size:9.15px;line-height:14px;color:#0f294d;">프리미엄 기내식 제공</div>
<svg class="abs" style="left:1331.5px;top:767.8px" width="11" height="10" viewBox="0 0 11 10" fill="#12868a"><path d="M0 4.500l3-1.300c.6-1.200 1.700-1.700 3.500-1.700h4l-.6 1.300h-2.600c2 .3 3.200 1.400 3.200 2.900 0 1.700-1.500 2.800-3.800 2.800s-3.800-1-3.800-2.600c0-.5.100-.9.400-1.300z M6.700 4.200c-1.300 0-2.200.6-2.200 1.500s.9 1.500 2.200 1.500 2.200-.6 2.200-1.500-.9-1.500-2.200-1.500z" fill-rule="evenodd"/></svg>
<div class="mt" style="left:1344.6px;top:765.8px;font-size:9.15px;line-height:14px;color:#0f294d;">항공사 마일리지: 최소 1,815</div>
<svg class="abs" style="left:1331.5px;top:784px" width="10" height="10" viewBox="0 0 10 10" fill="none" stroke="#12868a" stroke-width="1"><circle cx="5" cy="5" r="4"/><path d="M5 2.800v2.400h2"/></svg>
<div class="mt" style="left:1344.6px;top:782.0px;font-size:9.15px;line-height:14px;color:#0f294d;">발권: 결제 후 45분 이내</div>
<div class="mt" style="left:1332px;top:860.0px;font-size:13.2px;line-height:18px;color:#3264ff;font-weight:700;border-bottom:1px dashed #3264ff;height:17px;">702,800원</div>
<div class="mt" style="left:1332px;top:878.7px;font-size:8.3px;line-height:10px;color:#76839a;">왕복</div>
<div class="abs" style="left:1503.5px;top:732.5px;width:26px;height:25.5px;background:#fff;border-radius:2px;box-shadow:0 1px 5px rgba(15,41,77,.22);border:1px solid #eef0f4"></div>
<svg class="abs" style="left:1512px;top:738.500px" width="9" height="14" viewBox="0 0 9 14" fill="none" stroke="#3264ff" stroke-width="1.300"><path d="M1.500 1l6 6-6 6"/></svg>
<div class="abs" style="left:874px;top:909px;width:663px;height:66px;background:#fff;border-radius:0 0 5px 5px;box-shadow:0 -2px 5px rgba(15,41,77,.07)"></div>
<div class="abs" style="left:1472px;top:924px;width:45px;height:37px;border-radius:3px;background:#3264ff;color:#fff;font-weight:700;font-size:12.300px;line-height:36px;text-align:center;white-space:nowrap">계속</div>
<div class="mt" style="left:1390.5px;top:931.1px;font-size:15.7px;line-height:20px;color:#3264ff;font-weight:700;border-bottom:1px dashed #3264ff;height:19.500px;">699,600원</div>
<div class="mt" style="left:1370.8px;top:939.0px;font-size:8.3px;line-height:10px;color:#76839a;">왕복</div>

</div></div>

<svg class="abs" style="left:0;top:0;z-index:50" width="1748" height="996" viewBox="0 0 1748 996">
<polygon points="741.9,411.6 777.7,403.0 813.6,394.3 849.5,385.6 885.3,376.8 921.2,368.1 957.0,359.3 992.9,350.6 1028.7,341.8 1064.5,333.0 1100.4,324.2 1136.2,315.4 1172.1,306.7 1207.9,297.9 1243.7,289.1 1279.6,280.3 1315.4,271.5 1351.3,262.7 1387.1,253.9 1422.9,245.1 1458.8,236.2 1456.5,227.2 1420.7,236.4 1385.0,245.5 1349.2,254.6 1313.5,263.7 1277.7,272.8 1242.0,282.0 1206.2,291.1 1170.5,300.2 1134.7,309.4 1098.9,318.5 1063.2,327.7 1027.4,336.8 991.7,346.0 956.0,355.1 920.2,364.3 884.5,373.4 848.7,382.6 813.0,391.8 777.3,401.1 741.5,410.4" fill="#e2000f"/>
<polyline points="1445.0,228.1 1458.6,231.5 1448.2,240.9" fill="none" stroke="#e2000f" stroke-width="4.5" stroke-linecap="round" stroke-linejoin="miter"/>
<polygon points="744.8,414.9 752.7,437.0 760.7,459.1 768.7,481.2 776.8,503.2 784.8,525.3 792.9,547.3 800.9,569.4 809.0,591.4 817.1,613.5 825.2,635.5 833.3,657.6 841.3,679.6 849.4,701.6 857.5,723.7 865.6,745.7 873.7,767.8 881.8,789.8 889.9,811.8 898.0,833.9 906.1,855.9 914.8,852.6 906.4,830.7 898.0,808.8 889.6,786.9 881.2,764.9 872.8,743.0 864.4,721.1 855.9,699.2 847.5,677.3 839.1,655.4 830.7,633.4 822.3,611.5 813.8,589.6 805.4,567.7 796.9,545.8 788.5,523.9 780.0,502.0 771.6,480.1 763.1,458.2 754.6,436.3 746.0,414.5" fill="#e2000f"/>
<polyline points="912.6,841.3 910.8,855.2 900.3,845.9" fill="none" stroke="#e2000f" stroke-width="4.5" stroke-linecap="round" stroke-linejoin="miter"/>
<rect x="162.1" y="216.1" width="881.8" height="24.8" rx="1.200" fill="none" stroke="#e2000f" stroke-width="4.2"/>
<rect x="1461.4" y="212.1" width="77.5" height="24.8" rx="1.200" fill="none" stroke="#e2000f" stroke-width="4.2"/>
<rect x="1552.1" y="219.1" width="106.8" height="19.0" rx="1.200" fill="none" stroke="#e2000f" stroke-width="4.2"/>
<rect x="902.1" y="857.1" width="87.8" height="27.1" rx="1.200" fill="none" stroke="#e2000f" stroke-width="4.2"/>
</svg>
</body></html>
